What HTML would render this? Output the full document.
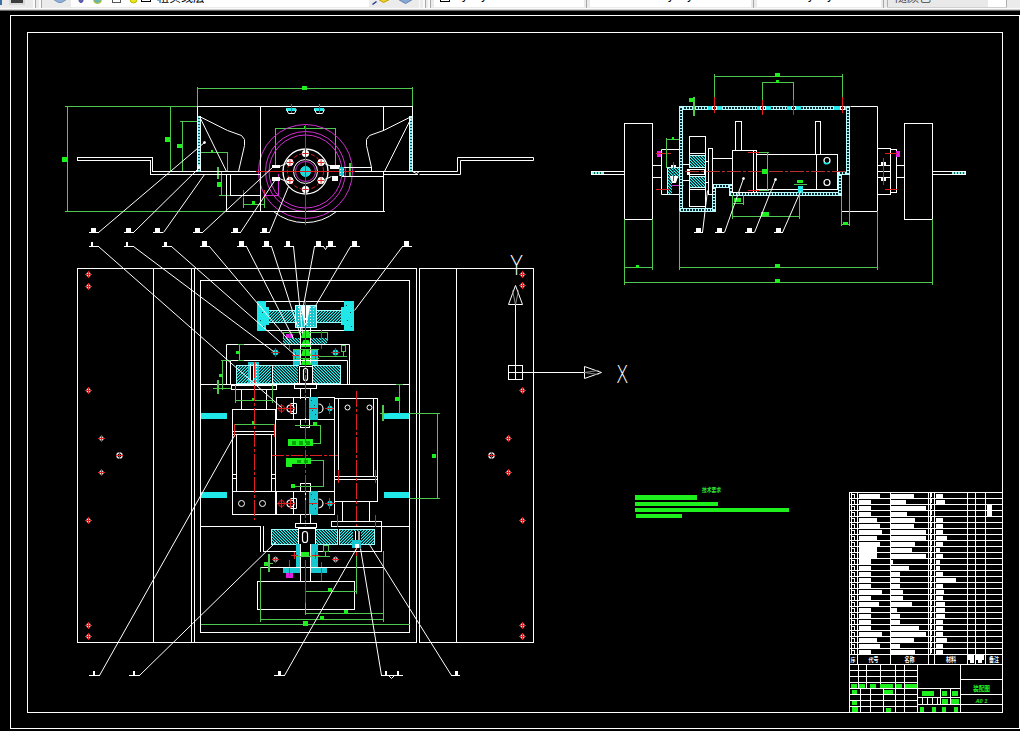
<!DOCTYPE html>
<html><head><meta charset="utf-8"><title>CAD</title>
<style>
html,body{margin:0;padding:0;background:#000;}
body{width:1020px;height:731px;overflow:hidden;position:relative;font-family:"Liberation Sans","Noto Sans CJK SC",sans-serif;}
#tb{position:absolute;left:0;top:0;width:1020px;height:11px;overflow:hidden;}
svg{position:absolute;left:0;top:0;}
</style></head><body>
<svg width="1020" height="731" viewBox="0 0 1020 731" font-family="'Liberation Sans','Noto Sans CJK SC',sans-serif">
<defs>
<pattern id="hc" width="3" height="3" patternUnits="userSpaceOnUse" shape-rendering="crispEdges"><rect x="0" y="0" width="1" height="1" fill="#0f7474"/><rect x="1" y="0" width="1" height="1" fill="#001414"/><rect x="2" y="0" width="1" height="1" fill="#36f2f2"/><rect x="0" y="1" width="1" height="1" fill="#001414"/><rect x="1" y="1" width="1" height="1" fill="#36f2f2"/><rect x="2" y="1" width="1" height="1" fill="#0f7474"/><rect x="0" y="2" width="1" height="1" fill="#36f2f2"/><rect x="1" y="2" width="1" height="1" fill="#0f7474"/><rect x="2" y="2" width="1" height="1" fill="#001414"/></pattern>
<pattern id="hd" width="3" height="3" patternUnits="userSpaceOnUse" shape-rendering="crispEdges"><rect x="0" y="0" width="1" height="1" fill="#0f7474"/><rect x="1" y="0" width="1" height="1" fill="#001414"/><rect x="2" y="0" width="1" height="1" fill="#36f2f2"/><rect x="0" y="1" width="1" height="1" fill="#36f2f2"/><rect x="1" y="1" width="1" height="1" fill="#0f7474"/><rect x="2" y="1" width="1" height="1" fill="#001414"/><rect x="0" y="2" width="1" height="1" fill="#001414"/><rect x="1" y="2" width="1" height="1" fill="#36f2f2"/><rect x="2" y="2" width="1" height="1" fill="#0f7474"/></pattern>
<pattern id="hw" width="3" height="3" patternUnits="userSpaceOnUse"><rect width="3" height="3" fill="#18c8d0"/><rect x="1" y="1" width="1" height="1" fill="#fff"/></pattern>
</defs>
<rect x="0" y="0" width="1020" height="8" fill="#ebebeb"/>
<rect x="0" y="8" width="1020" height="1" fill="#fbfbfb"/>
<rect x="0" y="9" width="1020" height="1" fill="#cfcfcf"/>
<rect x="0" y="10" width="1020" height="1" fill="#686868"/>
<rect x="0" y="0" width="2" height="5" fill="#3a6ea5"/>
<rect x="9" y="0" width="16" height="5" fill="#d8d8d8"/>
<rect x="11" y="0" width="12" height="3" fill="#3c3c3c"/>
<rect x="33" y="0" width="2" height="8" fill="#fafafa"/>
<rect x="35" y="0" width="1" height="8" fill="#a8a8a8"/>
<rect x="39" y="0" width="2" height="8" fill="#fafafa"/>
<rect x="41" y="0" width="1" height="8" fill="#a8a8a8"/>
<rect x="71" y="0" width="298" height="7" fill="#ffffff"/>
<polygon points="53.5,-0.5 58.5,2.5 61.5,2.5 66.5,-0.5" fill="#8fb0d8" stroke="#6f8fb8" stroke-width="1"/>
<circle cx="81.0" cy="0.5" r="2" fill="#6060b0" stroke="#5050a0" stroke-width="1" />
<circle cx="97.5" cy="-0.5" r="4" fill="#60b8b0" stroke="#c8c020" stroke-width="1" />
<rect x="112" y="0" width="9" height="2" fill="#fff"/>
<rect x="112" y="2" width="9" height="1" fill="#555"/>
<rect x="112" y="0" width="1" height="3" fill="#555"/>
<rect x="120" y="0" width="1" height="3" fill="#555"/>
<circle cx="133.5" cy="-0.5" r="3.5" fill="#e8e820" stroke="#b8b800" stroke-width="1" />
<rect x="141" y="0" width="10" height="2" fill="#fff"/>
<rect x="141" y="1" width="10" height="1" fill="#000"/>
<rect x="141" y="0" width="1" height="2" fill="#000"/>
<rect x="150" y="0" width="1" height="2" fill="#000"/>
<text x="157" y="1.5" font-size="12" fill="#000">粗实线层</text>
<line x1="372.5" y1="4.5" x2="376.5" y2="1.5" stroke="#203080" stroke-width="1.4" />
<polygon points="378.5,-0.5 383.5,2.5 389.5,-0.5" fill="#f0d020" stroke="#c0a000" stroke-width="1"/>
<polygon points="398.5,-0.5 405.5,3.5 412.5,-0.5" fill="#88a8d8" stroke="#6080b0" stroke-width="1"/>
<rect x="419" y="0" width="1" height="8" fill="#fafafa"/>
<rect x="423" y="0" width="2" height="8" fill="#fafafa"/>
<rect x="425" y="0" width="1" height="8" fill="#a8a8a8"/>
<rect x="428" y="0" width="2" height="8" fill="#fafafa"/>
<rect x="430" y="0" width="1" height="8" fill="#a8a8a8"/>
<rect x="434" y="0" width="150" height="7" fill="#ffffff"/>
<rect x="440" y="1" width="10" height="1" fill="#000"/>
<rect x="440" y="0" width="1" height="2" fill="#000"/>
<rect x="449" y="0" width="1" height="2" fill="#000"/>
<text x="454" y="-1" font-size="12" fill="#000">ByLayer</text>
<rect x="586" y="0" width="1" height="8" fill="#a8a8a8"/>
<rect x="590" y="0" width="161" height="7" fill="#ffffff"/>
<text x="660" y="-1" font-size="12" fill="#000">ByLayer</text>
<rect x="753" y="0" width="1" height="8" fill="#a8a8a8"/>
<rect x="757" y="0" width="124" height="7" fill="#ffffff"/>
<text x="800" y="-1" font-size="12" fill="#000">ByLayer</text>
<rect x="883" y="0" width="1" height="8" fill="#a8a8a8"/>
<rect x="887" y="0" width="119" height="7" fill="#e9e9e9"/>
<rect x="988" y="0" width="18" height="7" fill="#ffffff"/>
<rect x="887" y="0" width="1" height="8" fill="#b0b0b0"/>
<rect x="1006" y="0" width="1" height="8" fill="#b0b0b0"/>
<rect x="887" y="7" width="120" height="1" fill="#d0d0d0"/>
<text x="895" y="1.5" font-size="12" fill="#444">随颜色</text>
<rect x="0" y="11" width="1020" height="720" fill="#000"/>
<rect x="10" y="15" width="1010" height="1" fill="#ffffff"/>
<rect x="10" y="728" width="1010" height="1" fill="#ffffff"/>
<rect x="10" y="15" width="1" height="714" fill="#ffffff"/>
<rect x="1019" y="15" width="1" height="714" fill="#ffffff"/>
<rect x="27" y="32" width="976" height="1" fill="#ffffff"/>
<rect x="27" y="712" width="976" height="1" fill="#ffffff"/>
<rect x="27" y="32" width="1" height="681" fill="#ffffff"/>
<rect x="1002" y="32" width="1" height="681" fill="#ffffff"/>
<rect x="67" y="106" width="1" height="106" fill="#4fc84f"/>
<rect x="65" y="106" width="133" height="1" fill="#4fc84f"/>
<rect x="65" y="211" width="162" height="1" fill="#4fc84f"/>
<rect x="62" y="157" width="5" height="5" fill="#1ef01e"/>
<rect x="197" y="87" width="1" height="20" fill="#4fc84f"/>
<rect x="197" y="88" width="216" height="1" fill="#4fc84f"/>
<rect x="412" y="87" width="1" height="20" fill="#4fc84f"/>
<rect x="302" y="86" width="5" height="4" fill="#1ef01e"/>
<rect x="170" y="106" width="1" height="66" fill="#4fc84f"/>
<rect x="165" y="137" width="5" height="5" fill="#1ef01e"/>
<rect x="182" y="121" width="1" height="51" fill="#4fc84f"/>
<rect x="180" y="121" width="21" height="1" fill="#4fc84f"/>
<rect x="177" y="144" width="5" height="4" fill="#1ef01e"/>
<rect x="200" y="152" width="28" height="1" fill="#4fc84f"/>
<rect x="227" y="152" width="1" height="20" fill="#4fc84f"/>
<rect x="200" y="152" width="1" height="20" fill="#4fc84f"/>
<rect x="211" y="150" width="2" height="2" fill="#1ef01e"/>
<rect x="217" y="167" width="2" height="12" fill="#4fc84f"/>
<rect x="213" y="174" width="10" height="1" fill="#4fc84f"/>
<rect x="221" y="172" width="1" height="24" fill="#4fc84f"/>
<rect x="217" y="182" width="4" height="5" fill="#1ef01e"/>
<rect x="219" y="195" width="13" height="1" fill="#4fc84f"/>
<rect x="243" y="198" width="1" height="10" fill="#4fc84f"/>
<rect x="264" y="198" width="1" height="10" fill="#4fc84f"/>
<rect x="243" y="204" width="22" height="1" fill="#4fc84f"/>
<rect x="252" y="201" width="3" height="4" fill="#1ef01e"/>
<rect x="243" y="190" width="1" height="8" fill="#e02020"/>
<rect x="264" y="190" width="1" height="8" fill="#e02020"/>
<rect x="275" y="128" width="61" height="1" fill="#4fc84f"/>
<rect x="275" y="128" width="1" height="39" fill="#4fc84f"/>
<rect x="335" y="128" width="1" height="39" fill="#4fc84f"/>
<rect x="304" y="126" width="2" height="2" fill="#1ef01e"/>
<rect x="349" y="163" width="2" height="14" fill="#4fc84f"/>
<rect x="345" y="171" width="8" height="1" fill="#4fc84f"/>
<circle cx="305.5" cy="171.5" r="47" fill="none" stroke="#d030d0" stroke-width="1" />
<circle cx="305.5" cy="171.5" r="40" fill="none" stroke="#d030d0" stroke-width="1" />
<circle cx="305.5" cy="171.5" r="36.5" fill="none" stroke="#d030d0" stroke-width="1" />
<circle cx="305.5" cy="171.5" r="10" fill="none" stroke="#d030d0" stroke-width="1" />
<rect x="278" y="174" width="1" height="22" fill="#d030d0"/>
<rect x="264" y="195" width="15" height="1" fill="#d030d0"/>
<rect x="197" y="106" width="216" height="1" fill="#ffffff"/>
<rect x="197" y="106" width="1" height="11" fill="#ffffff"/>
<rect x="412" y="106" width="1" height="11" fill="#ffffff"/>
<rect x="260" y="106" width="1" height="106" fill="#ffffff"/>
<rect x="383" y="106" width="1" height="25" fill="#ffffff"/>
<rect x="383" y="171" width="1" height="41" fill="#ffffff"/>
<rect x="226" y="211" width="159" height="1" fill="#ffffff"/>
<rect x="226" y="174" width="1" height="38" fill="#ffffff"/>
<rect x="230" y="174" width="1" height="22" fill="#ffffff"/>
<rect x="230" y="195" width="31" height="1" fill="#ffffff"/>
<path d="M273.5,211.5 A50,50 0 0 0 336.5,211.5" fill="none" stroke="#fff" stroke-width="1"/>
<rect x="77" y="157" width="76" height="1" fill="#ffffff"/>
<rect x="77" y="160" width="74" height="1" fill="#ffffff"/>
<rect x="77" y="157" width="1" height="4" fill="#ffffff"/>
<rect x="152" y="157" width="1" height="15" fill="#ffffff"/>
<rect x="150" y="160" width="1" height="15" fill="#ffffff"/>
<rect x="152" y="171" width="107" height="1" fill="#ffffff"/>
<rect x="150" y="174" width="111" height="1" fill="#ffffff"/>
<rect x="342" y="167" width="30" height="1" fill="#ffffff"/>
<rect x="371" y="167" width="1" height="5" fill="#ffffff"/>
<rect x="352" y="171" width="66" height="1" fill="#ffffff"/>
<rect x="383" y="174" width="35" height="1" fill="#ffffff"/>
<rect x="342" y="176" width="42" height="1" fill="#ffffff"/>
<polyline points="416.5,171.5 457.5,171.5 457.5,157.5 533.5,157.5 533.5,160.5 460.5,160.5 460.5,174.5 419.5,174.5" fill="none" stroke="#ffffff" stroke-width="1"/>
<polyline points="412.5,171.5 416.5,173.5 419.5,171.5" fill="none" stroke="#ffffff" stroke-width="1"/>
<rect x="197" y="116" width="4" height="56" fill="#7fe8ee"/>
<rect x="197" y="116" width="1" height="56" fill="#e8ffff"/>
<rect x="200" y="116" width="1" height="56" fill="#e8ffff"/>
<rect x="198" y="118" width="2" height="1" fill="#0a5058"/>
<rect x="198" y="121" width="2" height="1" fill="#0a5058"/>
<rect x="198" y="124" width="2" height="1" fill="#0a5058"/>
<rect x="198" y="127" width="2" height="1" fill="#0a5058"/>
<rect x="198" y="130" width="2" height="1" fill="#0a5058"/>
<rect x="198" y="133" width="2" height="1" fill="#0a5058"/>
<rect x="198" y="136" width="2" height="1" fill="#0a5058"/>
<rect x="198" y="139" width="2" height="1" fill="#0a5058"/>
<rect x="198" y="142" width="2" height="1" fill="#0a5058"/>
<rect x="198" y="145" width="2" height="1" fill="#0a5058"/>
<rect x="198" y="148" width="2" height="1" fill="#0a5058"/>
<rect x="198" y="151" width="2" height="1" fill="#0a5058"/>
<rect x="198" y="154" width="2" height="1" fill="#0a5058"/>
<rect x="198" y="157" width="2" height="1" fill="#0a5058"/>
<rect x="198" y="160" width="2" height="1" fill="#0a5058"/>
<rect x="198" y="163" width="2" height="1" fill="#0a5058"/>
<rect x="198" y="166" width="2" height="1" fill="#0a5058"/>
<rect x="198" y="169" width="2" height="1" fill="#0a5058"/>
<rect x="409" y="116" width="4" height="56" fill="#7fe8ee"/>
<rect x="409" y="116" width="1" height="56" fill="#e8ffff"/>
<rect x="412" y="116" width="1" height="56" fill="#e8ffff"/>
<rect x="410" y="118" width="2" height="1" fill="#0a5058"/>
<rect x="410" y="121" width="2" height="1" fill="#0a5058"/>
<rect x="410" y="124" width="2" height="1" fill="#0a5058"/>
<rect x="410" y="127" width="2" height="1" fill="#0a5058"/>
<rect x="410" y="130" width="2" height="1" fill="#0a5058"/>
<rect x="410" y="133" width="2" height="1" fill="#0a5058"/>
<rect x="410" y="136" width="2" height="1" fill="#0a5058"/>
<rect x="410" y="139" width="2" height="1" fill="#0a5058"/>
<rect x="410" y="142" width="2" height="1" fill="#0a5058"/>
<rect x="410" y="145" width="2" height="1" fill="#0a5058"/>
<rect x="410" y="148" width="2" height="1" fill="#0a5058"/>
<rect x="410" y="151" width="2" height="1" fill="#0a5058"/>
<rect x="410" y="154" width="2" height="1" fill="#0a5058"/>
<rect x="410" y="157" width="2" height="1" fill="#0a5058"/>
<rect x="410" y="160" width="2" height="1" fill="#0a5058"/>
<rect x="410" y="163" width="2" height="1" fill="#0a5058"/>
<rect x="410" y="166" width="2" height="1" fill="#0a5058"/>
<rect x="410" y="169" width="2" height="1" fill="#0a5058"/>
<polyline points="199.5,116.5 227.5,130.5 241.5,135.5 244.5,139.5 244.5,145.5 238.5,171.5" fill="none" stroke="#ffffff" stroke-width="1"/>
<line x1="199.5" y1="116.5" x2="226.5" y2="171.5" stroke="#ffffff" stroke-width="1" />
<polyline points="411.5,116.5 383.5,130.5 369.5,135.5 366.5,139.5 366.5,145.5 371.5,167.5" fill="none" stroke="#ffffff" stroke-width="1"/>
<line x1="411.5" y1="117.5" x2="384.5" y2="171.5" stroke="#ffffff" stroke-width="1" />
<rect x="286" y="108" width="10" height="3" fill="#20e8e8"/>
<polyline points="286.5,109.5 288.5,113.5 294.5,113.5 296.5,109.5" fill="none" stroke="#ffffff" stroke-width="1"/>
<rect x="291" y="104" width="1" height="9" fill="#e02020"/>
<rect x="314" y="108" width="10" height="3" fill="#20e8e8"/>
<polyline points="314.5,109.5 316.5,113.5 322.5,113.5 324.5,109.5" fill="none" stroke="#ffffff" stroke-width="1"/>
<rect x="319" y="104" width="1" height="9" fill="#e02020"/>
<circle cx="305.5" cy="171.5" r="22.5" fill="none" stroke="#ffffff" stroke-width="1.3" />
<circle cx="305.5" cy="171.5" r="12" fill="none" stroke="#ffffff" stroke-width="1" />
<circle cx="305.5" cy="171.5" r="18" fill="none" stroke="#e02020" stroke-width="1" stroke-dasharray="4 2"/>
<circle cx="305.5" cy="171.5" r="5" fill="#20d8d8" stroke="#20e8e8" stroke-width="1" />
<circle cx="305.5" cy="153.5" r="3.2" fill="#fff" stroke="#ffffff" stroke-width="1" />
<path d="M302.5,153.5 h6 M305.5,150.5 v6" stroke="#e02020" stroke-width="1"/>
<circle cx="289.9115427318801" cy="162.5" r="3.2" fill="#fff" stroke="#ffffff" stroke-width="1" />
<path d="M286.9115427318801,162.5 h6 M289.9115427318801,159.5 v6" stroke="#e02020" stroke-width="1"/>
<circle cx="289.9115427318801" cy="180.5" r="3.2" fill="#fff" stroke="#ffffff" stroke-width="1" />
<path d="M286.9115427318801,180.5 h6 M289.9115427318801,177.5 v6" stroke="#e02020" stroke-width="1"/>
<circle cx="305.5" cy="189.5" r="3.2" fill="#fff" stroke="#ffffff" stroke-width="1" />
<path d="M302.5,189.5 h6 M305.5,186.5 v6" stroke="#e02020" stroke-width="1"/>
<circle cx="321.0884572681199" cy="180.5" r="3.2" fill="#fff" stroke="#ffffff" stroke-width="1" />
<path d="M318.0884572681199,180.5 h6 M321.0884572681199,177.5 v6" stroke="#e02020" stroke-width="1"/>
<circle cx="321.0884572681199" cy="162.5" r="3.2" fill="#fff" stroke="#ffffff" stroke-width="1" />
<path d="M318.0884572681199,162.5 h6 M321.0884572681199,159.5 v6" stroke="#e02020" stroke-width="1"/>
<rect x="256" y="171" width="99" height="1" fill="#e02020"/>
<rect x="305" y="125" width="1" height="100" fill="#e02020"/>
<rect x="272" y="165" width="8" height="3" fill="#ffffff"/>
<rect x="272" y="177" width="8" height="4" fill="#ffffff"/>
<rect x="330" y="165" width="10" height="4" fill="#ffffff"/>
<rect x="332" y="176" width="6" height="5" fill="#ffffff"/>
<rect x="326" y="166" width="19" height="11" fill="none"/>
<rect x="339" y="167" width="5" height="9" fill="url(#hw)"/>
<line x1="279.5" y1="166.5" x2="286.5" y2="163.5" stroke="#ffffff" stroke-width="1" />
<line x1="279.5" y1="178.5" x2="286.5" y2="181.5" stroke="#ffffff" stroke-width="1" />
<line x1="324.5" y1="163.5" x2="331.5" y2="166.5" stroke="#ffffff" stroke-width="1" />
<line x1="324.5" y1="179.5" x2="331.5" y2="176.5" stroke="#ffffff" stroke-width="1" />
<rect x="89" y="232" width="10" height="1" fill="#ffffff"/>
<rect x="91" y="228" width="5" height="4" fill="#ffffff"/>
<rect x="124" y="232" width="10" height="1" fill="#ffffff"/>
<rect x="126" y="228" width="5" height="4" fill="#ffffff"/>
<rect x="153" y="232" width="10" height="1" fill="#ffffff"/>
<rect x="155" y="228" width="5" height="4" fill="#ffffff"/>
<rect x="193" y="232" width="10" height="1" fill="#ffffff"/>
<rect x="195" y="228" width="5" height="4" fill="#ffffff"/>
<rect x="231" y="232" width="10" height="1" fill="#ffffff"/>
<rect x="233" y="228" width="5" height="4" fill="#ffffff"/>
<rect x="260" y="232" width="10" height="1" fill="#ffffff"/>
<rect x="262" y="228" width="5" height="4" fill="#ffffff"/>
<rect x="89" y="246" width="10" height="1" fill="#ffffff"/>
<rect x="91" y="242" width="2" height="4" fill="#ffffff"/>
<rect x="124" y="246" width="10" height="1" fill="#ffffff"/>
<rect x="126" y="242" width="2" height="4" fill="#ffffff"/>
<rect x="162" y="246" width="10" height="1" fill="#ffffff"/>
<rect x="164" y="242" width="3" height="4" fill="#ffffff"/>
<rect x="200" y="246" width="10" height="1" fill="#ffffff"/>
<rect x="202" y="241" width="5" height="5" fill="#ffffff"/>
<rect x="237" y="246" width="10" height="1" fill="#ffffff"/>
<rect x="239" y="241" width="5" height="5" fill="#ffffff"/>
<rect x="262" y="246" width="10" height="1" fill="#ffffff"/>
<rect x="264" y="241" width="5" height="5" fill="#ffffff"/>
<rect x="284" y="246" width="10" height="1" fill="#ffffff"/>
<rect x="286" y="241" width="4" height="5" fill="#ffffff"/>
<rect x="314" y="246" width="10" height="1" fill="#ffffff"/>
<rect x="316" y="241" width="5" height="5" fill="#ffffff"/>
<rect x="326" y="246" width="10" height="1" fill="#ffffff"/>
<rect x="328" y="241" width="5" height="5" fill="#ffffff"/>
<rect x="350" y="246" width="10" height="1" fill="#ffffff"/>
<rect x="352" y="241" width="5" height="5" fill="#ffffff"/>
<rect x="402" y="246" width="10" height="1" fill="#ffffff"/>
<rect x="404" y="241" width="5" height="5" fill="#ffffff"/>
<line x1="98.5" y1="232.5" x2="204.5" y2="142.5" stroke="#ffffff" stroke-width="1" />
<circle cx="204.5" cy="142.5" r="1" fill="#fff" stroke="#ffffff" stroke-width="1" />
<line x1="133.5" y1="232.5" x2="199.5" y2="167.5" stroke="#ffffff" stroke-width="1" />
<circle cx="199.0" cy="167.0" r="1" fill="#fff" stroke="#ffffff" stroke-width="1" />
<line x1="163.5" y1="232.5" x2="204.5" y2="174.5" stroke="#ffffff" stroke-width="1" />
<line x1="202.5" y1="232.5" x2="272.5" y2="167.5" stroke="#ffffff" stroke-width="1" />
<line x1="240.5" y1="232.5" x2="275.5" y2="179.5" stroke="#ffffff" stroke-width="1" />
<line x1="269.5" y1="232.5" x2="288.5" y2="186.5" stroke="#ffffff" stroke-width="1" />
<rect x="624" y="123" width="29" height="1" fill="#ffffff"/>
<rect x="624" y="219" width="29" height="1" fill="#ffffff"/>
<rect x="624" y="123" width="1" height="97" fill="#ffffff"/>
<rect x="652" y="123" width="1" height="97" fill="#ffffff"/>
<rect x="904" y="123" width="29" height="1" fill="#ffffff"/>
<rect x="904" y="219" width="29" height="1" fill="#ffffff"/>
<rect x="904" y="123" width="1" height="97" fill="#ffffff"/>
<rect x="932" y="123" width="1" height="97" fill="#ffffff"/>
<rect x="591" y="171" width="34" height="1" fill="#ffffff"/>
<rect x="591" y="174" width="34" height="1" fill="#ffffff"/>
<rect x="591" y="171" width="1" height="4" fill="#ffffff"/>
<rect x="624" y="171" width="1" height="4" fill="#ffffff"/>
<rect x="592" y="172" width="12" height="2" fill="#8fe8ee"/>
<rect x="594" y="172" width="1" height="2" fill="#063"/>
<rect x="597" y="172" width="1" height="2" fill="#063"/>
<rect x="600" y="172" width="1" height="2" fill="#063"/>
<rect x="932" y="171" width="34" height="1" fill="#ffffff"/>
<rect x="932" y="174" width="34" height="1" fill="#ffffff"/>
<rect x="932" y="171" width="1" height="4" fill="#ffffff"/>
<rect x="965" y="171" width="1" height="4" fill="#ffffff"/>
<rect x="952" y="172" width="13" height="2" fill="#8fe8ee"/>
<rect x="954" y="172" width="1" height="2" fill="#063"/>
<rect x="957" y="172" width="1" height="2" fill="#063"/>
<rect x="960" y="172" width="1" height="2" fill="#063"/>
<rect x="963" y="172" width="1" height="2" fill="#063"/>
<rect x="652" y="165" width="10" height="1" fill="#ffffff"/>
<rect x="652" y="177" width="10" height="1" fill="#ffffff"/>
<rect x="652" y="165" width="1" height="13" fill="#ffffff"/>
<rect x="661" y="165" width="1" height="13" fill="#ffffff"/>
<polyline points="679.5,149.5 661.5,149.5 661.5,194.5 679.5,194.5" fill="none" stroke="#ffffff" stroke-width="1"/>
<rect x="667" y="167" width="13" height="11" fill="url(#hd)"/>
<rect x="667" y="178" width="5" height="17" fill="url(#hd)"/>
<rect x="667" y="167" width="13" height="1" fill="#c8ffff"/>
<rect x="667" y="167" width="1" height="28" fill="#c8ffff"/>
<rect x="667" y="194" width="6" height="1" fill="#c8ffff"/>
<polygon points="670.5,176.5 672.5,182.5 675.5,182.5 677.5,176.5" fill="#fff" stroke="#ffffff" stroke-width="1.2"/>
<rect x="671" y="165" width="5" height="2" fill="#ffffff"/>
<rect x="673" y="162" width="1" height="19" fill="#e02020"/>
<rect x="657" y="151" width="4" height="6" fill="#e020e0"/>
<rect x="656" y="153" width="15" height="1" fill="#e02020"/>
<rect x="656" y="189" width="13" height="1" fill="#e02020"/>
<rect x="672" y="185" width="12" height="1" fill="#d030d0"/>
<rect x="666" y="138" width="1" height="30" fill="#4fc84f"/>
<rect x="679" y="138" width="1" height="30" fill="#4fc84f"/>
<rect x="666" y="139" width="14" height="1" fill="#4fc84f"/>
<rect x="672" y="137" width="2" height="3" fill="#1ef01e"/>
<rect x="679" y="106" width="171" height="4" fill="#b8fbff"/>
<rect x="681" y="107" width="2" height="2" fill="#052a30"/>
<rect x="684" y="107" width="2" height="2" fill="#052a30"/>
<rect x="687" y="107" width="2" height="2" fill="#052a30"/>
<rect x="690" y="107" width="2" height="2" fill="#052a30"/>
<rect x="693" y="107" width="2" height="2" fill="#052a30"/>
<rect x="696" y="107" width="2" height="2" fill="#052a30"/>
<rect x="699" y="107" width="2" height="2" fill="#052a30"/>
<rect x="702" y="107" width="2" height="2" fill="#052a30"/>
<rect x="705" y="107" width="2" height="2" fill="#052a30"/>
<rect x="708" y="107" width="2" height="2" fill="#052a30"/>
<rect x="711" y="107" width="2" height="2" fill="#052a30"/>
<rect x="714" y="107" width="2" height="2" fill="#052a30"/>
<rect x="717" y="107" width="2" height="2" fill="#052a30"/>
<rect x="720" y="107" width="2" height="2" fill="#052a30"/>
<rect x="723" y="107" width="2" height="2" fill="#052a30"/>
<rect x="726" y="107" width="2" height="2" fill="#052a30"/>
<rect x="729" y="107" width="2" height="2" fill="#052a30"/>
<rect x="732" y="107" width="2" height="2" fill="#052a30"/>
<rect x="735" y="107" width="2" height="2" fill="#052a30"/>
<rect x="738" y="107" width="2" height="2" fill="#052a30"/>
<rect x="741" y="107" width="2" height="2" fill="#052a30"/>
<rect x="744" y="107" width="2" height="2" fill="#052a30"/>
<rect x="747" y="107" width="2" height="2" fill="#052a30"/>
<rect x="750" y="107" width="2" height="2" fill="#052a30"/>
<rect x="753" y="107" width="2" height="2" fill="#052a30"/>
<rect x="756" y="107" width="2" height="2" fill="#052a30"/>
<rect x="759" y="107" width="2" height="2" fill="#052a30"/>
<rect x="762" y="107" width="2" height="2" fill="#052a30"/>
<rect x="765" y="107" width="2" height="2" fill="#052a30"/>
<rect x="768" y="107" width="2" height="2" fill="#052a30"/>
<rect x="771" y="107" width="2" height="2" fill="#052a30"/>
<rect x="774" y="107" width="2" height="2" fill="#052a30"/>
<rect x="777" y="107" width="2" height="2" fill="#052a30"/>
<rect x="780" y="107" width="2" height="2" fill="#052a30"/>
<rect x="783" y="107" width="2" height="2" fill="#052a30"/>
<rect x="786" y="107" width="2" height="2" fill="#052a30"/>
<rect x="789" y="107" width="2" height="2" fill="#052a30"/>
<rect x="792" y="107" width="2" height="2" fill="#052a30"/>
<rect x="795" y="107" width="2" height="2" fill="#052a30"/>
<rect x="798" y="107" width="2" height="2" fill="#052a30"/>
<rect x="801" y="107" width="2" height="2" fill="#052a30"/>
<rect x="804" y="107" width="2" height="2" fill="#052a30"/>
<rect x="807" y="107" width="2" height="2" fill="#052a30"/>
<rect x="810" y="107" width="2" height="2" fill="#052a30"/>
<rect x="813" y="107" width="2" height="2" fill="#052a30"/>
<rect x="816" y="107" width="2" height="2" fill="#052a30"/>
<rect x="819" y="107" width="2" height="2" fill="#052a30"/>
<rect x="822" y="107" width="2" height="2" fill="#052a30"/>
<rect x="825" y="107" width="2" height="2" fill="#052a30"/>
<rect x="828" y="107" width="2" height="2" fill="#052a30"/>
<rect x="831" y="107" width="2" height="2" fill="#052a30"/>
<rect x="834" y="107" width="2" height="2" fill="#052a30"/>
<rect x="837" y="107" width="2" height="2" fill="#052a30"/>
<rect x="840" y="107" width="2" height="2" fill="#052a30"/>
<rect x="843" y="107" width="2" height="2" fill="#052a30"/>
<rect x="846" y="107" width="2" height="2" fill="#052a30"/>
<rect x="679" y="106" width="4" height="106" fill="#b8fbff"/>
<rect x="680" y="108" width="2" height="2" fill="#052a30"/>
<rect x="680" y="111" width="2" height="2" fill="#052a30"/>
<rect x="680" y="114" width="2" height="2" fill="#052a30"/>
<rect x="680" y="117" width="2" height="2" fill="#052a30"/>
<rect x="680" y="120" width="2" height="2" fill="#052a30"/>
<rect x="680" y="123" width="2" height="2" fill="#052a30"/>
<rect x="680" y="126" width="2" height="2" fill="#052a30"/>
<rect x="680" y="129" width="2" height="2" fill="#052a30"/>
<rect x="680" y="132" width="2" height="2" fill="#052a30"/>
<rect x="680" y="135" width="2" height="2" fill="#052a30"/>
<rect x="680" y="138" width="2" height="2" fill="#052a30"/>
<rect x="680" y="141" width="2" height="2" fill="#052a30"/>
<rect x="680" y="144" width="2" height="2" fill="#052a30"/>
<rect x="680" y="147" width="2" height="2" fill="#052a30"/>
<rect x="680" y="150" width="2" height="2" fill="#052a30"/>
<rect x="680" y="153" width="2" height="2" fill="#052a30"/>
<rect x="680" y="156" width="2" height="2" fill="#052a30"/>
<rect x="680" y="159" width="2" height="2" fill="#052a30"/>
<rect x="680" y="162" width="2" height="2" fill="#052a30"/>
<rect x="680" y="165" width="2" height="2" fill="#052a30"/>
<rect x="680" y="168" width="2" height="2" fill="#052a30"/>
<rect x="680" y="171" width="2" height="2" fill="#052a30"/>
<rect x="680" y="174" width="2" height="2" fill="#052a30"/>
<rect x="680" y="177" width="2" height="2" fill="#052a30"/>
<rect x="680" y="180" width="2" height="2" fill="#052a30"/>
<rect x="680" y="183" width="2" height="2" fill="#052a30"/>
<rect x="680" y="186" width="2" height="2" fill="#052a30"/>
<rect x="680" y="189" width="2" height="2" fill="#052a30"/>
<rect x="680" y="192" width="2" height="2" fill="#052a30"/>
<rect x="680" y="195" width="2" height="2" fill="#052a30"/>
<rect x="680" y="198" width="2" height="2" fill="#052a30"/>
<rect x="680" y="201" width="2" height="2" fill="#052a30"/>
<rect x="680" y="204" width="2" height="2" fill="#052a30"/>
<rect x="680" y="207" width="2" height="2" fill="#052a30"/>
<rect x="679" y="208" width="37" height="4" fill="#b8fbff"/>
<rect x="681" y="209" width="2" height="2" fill="#052a30"/>
<rect x="684" y="209" width="2" height="2" fill="#052a30"/>
<rect x="687" y="209" width="2" height="2" fill="#052a30"/>
<rect x="690" y="209" width="2" height="2" fill="#052a30"/>
<rect x="693" y="209" width="2" height="2" fill="#052a30"/>
<rect x="696" y="209" width="2" height="2" fill="#052a30"/>
<rect x="699" y="209" width="2" height="2" fill="#052a30"/>
<rect x="702" y="209" width="2" height="2" fill="#052a30"/>
<rect x="705" y="209" width="2" height="2" fill="#052a30"/>
<rect x="708" y="209" width="2" height="2" fill="#052a30"/>
<rect x="711" y="209" width="2" height="2" fill="#052a30"/>
<rect x="712" y="184" width="4" height="28" fill="#b8fbff"/>
<rect x="713" y="186" width="2" height="2" fill="#052a30"/>
<rect x="713" y="189" width="2" height="2" fill="#052a30"/>
<rect x="713" y="192" width="2" height="2" fill="#052a30"/>
<rect x="713" y="195" width="2" height="2" fill="#052a30"/>
<rect x="713" y="198" width="2" height="2" fill="#052a30"/>
<rect x="713" y="201" width="2" height="2" fill="#052a30"/>
<rect x="713" y="204" width="2" height="2" fill="#052a30"/>
<rect x="713" y="207" width="2" height="2" fill="#052a30"/>
<rect x="712" y="184" width="21" height="4" fill="#b8fbff"/>
<rect x="714" y="185" width="2" height="2" fill="#052a30"/>
<rect x="717" y="185" width="2" height="2" fill="#052a30"/>
<rect x="720" y="185" width="2" height="2" fill="#052a30"/>
<rect x="723" y="185" width="2" height="2" fill="#052a30"/>
<rect x="726" y="185" width="2" height="2" fill="#052a30"/>
<rect x="729" y="185" width="2" height="2" fill="#052a30"/>
<rect x="729" y="184" width="4" height="12" fill="#b8fbff"/>
<rect x="730" y="186" width="2" height="2" fill="#052a30"/>
<rect x="730" y="189" width="2" height="2" fill="#052a30"/>
<rect x="730" y="192" width="2" height="2" fill="#052a30"/>
<rect x="729" y="192" width="113" height="4" fill="#b8fbff"/>
<rect x="731" y="193" width="2" height="2" fill="#052a30"/>
<rect x="734" y="193" width="2" height="2" fill="#052a30"/>
<rect x="737" y="193" width="2" height="2" fill="#052a30"/>
<rect x="740" y="193" width="2" height="2" fill="#052a30"/>
<rect x="743" y="193" width="2" height="2" fill="#052a30"/>
<rect x="746" y="193" width="2" height="2" fill="#052a30"/>
<rect x="749" y="193" width="2" height="2" fill="#052a30"/>
<rect x="752" y="193" width="2" height="2" fill="#052a30"/>
<rect x="755" y="193" width="2" height="2" fill="#052a30"/>
<rect x="758" y="193" width="2" height="2" fill="#052a30"/>
<rect x="761" y="193" width="2" height="2" fill="#052a30"/>
<rect x="764" y="193" width="2" height="2" fill="#052a30"/>
<rect x="767" y="193" width="2" height="2" fill="#052a30"/>
<rect x="770" y="193" width="2" height="2" fill="#052a30"/>
<rect x="773" y="193" width="2" height="2" fill="#052a30"/>
<rect x="776" y="193" width="2" height="2" fill="#052a30"/>
<rect x="779" y="193" width="2" height="2" fill="#052a30"/>
<rect x="782" y="193" width="2" height="2" fill="#052a30"/>
<rect x="785" y="193" width="2" height="2" fill="#052a30"/>
<rect x="788" y="193" width="2" height="2" fill="#052a30"/>
<rect x="791" y="193" width="2" height="2" fill="#052a30"/>
<rect x="794" y="193" width="2" height="2" fill="#052a30"/>
<rect x="797" y="193" width="2" height="2" fill="#052a30"/>
<rect x="800" y="193" width="2" height="2" fill="#052a30"/>
<rect x="803" y="193" width="2" height="2" fill="#052a30"/>
<rect x="806" y="193" width="2" height="2" fill="#052a30"/>
<rect x="809" y="193" width="2" height="2" fill="#052a30"/>
<rect x="812" y="193" width="2" height="2" fill="#052a30"/>
<rect x="815" y="193" width="2" height="2" fill="#052a30"/>
<rect x="818" y="193" width="2" height="2" fill="#052a30"/>
<rect x="821" y="193" width="2" height="2" fill="#052a30"/>
<rect x="824" y="193" width="2" height="2" fill="#052a30"/>
<rect x="827" y="193" width="2" height="2" fill="#052a30"/>
<rect x="830" y="193" width="2" height="2" fill="#052a30"/>
<rect x="833" y="193" width="2" height="2" fill="#052a30"/>
<rect x="836" y="193" width="2" height="2" fill="#052a30"/>
<rect x="839" y="193" width="2" height="2" fill="#052a30"/>
<rect x="838" y="171" width="4" height="25" fill="#b8fbff"/>
<rect x="839" y="173" width="2" height="2" fill="#052a30"/>
<rect x="839" y="176" width="2" height="2" fill="#052a30"/>
<rect x="839" y="179" width="2" height="2" fill="#052a30"/>
<rect x="839" y="182" width="2" height="2" fill="#052a30"/>
<rect x="839" y="185" width="2" height="2" fill="#052a30"/>
<rect x="839" y="188" width="2" height="2" fill="#052a30"/>
<rect x="839" y="191" width="2" height="2" fill="#052a30"/>
<rect x="838" y="171" width="12" height="4" fill="#b8fbff"/>
<rect x="840" y="172" width="2" height="2" fill="#052a30"/>
<rect x="843" y="172" width="2" height="2" fill="#052a30"/>
<rect x="846" y="172" width="2" height="2" fill="#052a30"/>
<rect x="846" y="106" width="4" height="69" fill="#b8fbff"/>
<rect x="847" y="108" width="2" height="2" fill="#052a30"/>
<rect x="847" y="111" width="2" height="2" fill="#052a30"/>
<rect x="847" y="114" width="2" height="2" fill="#052a30"/>
<rect x="847" y="117" width="2" height="2" fill="#052a30"/>
<rect x="847" y="120" width="2" height="2" fill="#052a30"/>
<rect x="847" y="123" width="2" height="2" fill="#052a30"/>
<rect x="847" y="126" width="2" height="2" fill="#052a30"/>
<rect x="847" y="129" width="2" height="2" fill="#052a30"/>
<rect x="847" y="132" width="2" height="2" fill="#052a30"/>
<rect x="847" y="135" width="2" height="2" fill="#052a30"/>
<rect x="847" y="138" width="2" height="2" fill="#052a30"/>
<rect x="847" y="141" width="2" height="2" fill="#052a30"/>
<rect x="847" y="144" width="2" height="2" fill="#052a30"/>
<rect x="847" y="147" width="2" height="2" fill="#052a30"/>
<rect x="847" y="150" width="2" height="2" fill="#052a30"/>
<rect x="847" y="153" width="2" height="2" fill="#052a30"/>
<rect x="847" y="156" width="2" height="2" fill="#052a30"/>
<rect x="847" y="159" width="2" height="2" fill="#052a30"/>
<rect x="847" y="162" width="2" height="2" fill="#052a30"/>
<rect x="847" y="165" width="2" height="2" fill="#052a30"/>
<rect x="847" y="168" width="2" height="2" fill="#052a30"/>
<rect x="847" y="171" width="2" height="2" fill="#052a30"/>
<rect x="708" y="106" width="14" height="4" fill="#20e8e8"/>
<rect x="712" y="106" width="5" height="4" fill="#ffffff"/>
<rect x="713" y="107" width="1" height="2" fill="#000"/>
<rect x="715" y="107" width="1" height="2" fill="#000"/>
<rect x="757" y="106" width="14" height="4" fill="#20e8e8"/>
<rect x="760" y="106" width="6" height="4" fill="#ffffff"/>
<rect x="761" y="107" width="1" height="2" fill="#000"/>
<rect x="764" y="107" width="1" height="2" fill="#000"/>
<rect x="787" y="106" width="14" height="4" fill="#20e8e8"/>
<rect x="791" y="106" width="5" height="4" fill="#ffffff"/>
<rect x="792" y="107" width="1" height="2" fill="#000"/>
<rect x="794" y="107" width="1" height="2" fill="#000"/>
<rect x="834" y="106" width="12" height="4" fill="#20e8e8"/>
<rect x="840" y="106" width="5" height="4" fill="#ffffff"/>
<rect x="841" y="107" width="1" height="2" fill="#000"/>
<rect x="843" y="107" width="1" height="2" fill="#000"/>
<rect x="689" y="136" width="17" height="1" fill="#ffffff"/>
<rect x="689" y="206" width="17" height="1" fill="#ffffff"/>
<rect x="689" y="136" width="1" height="71" fill="#ffffff"/>
<rect x="705" y="136" width="1" height="71" fill="#ffffff"/>
<rect x="689" y="153" width="17" height="1" fill="#ffffff"/>
<rect x="689" y="189" width="17" height="1" fill="#ffffff"/>
<rect x="689" y="155" width="17" height="13" fill="url(#hd)"/>
<rect x="689" y="176" width="17" height="12" fill="url(#hd)"/>
<rect x="689" y="155" width="17" height="1" fill="#c8ffff"/>
<rect x="689" y="167" width="17" height="1" fill="#c8ffff"/>
<rect x="689" y="155" width="1" height="13" fill="#c8ffff"/>
<rect x="705" y="155" width="1" height="13" fill="#c8ffff"/>
<rect x="689" y="176" width="17" height="1" fill="#c8ffff"/>
<rect x="689" y="187" width="17" height="1" fill="#c8ffff"/>
<rect x="689" y="176" width="1" height="12" fill="#c8ffff"/>
<rect x="705" y="176" width="1" height="12" fill="#c8ffff"/>
<rect x="686" y="168" width="18" height="7" fill="#000"/>
<rect x="687" y="169" width="18" height="1" fill="#ffffff"/>
<rect x="687" y="174" width="18" height="1" fill="#ffffff"/>
<rect x="687" y="169" width="1" height="6" fill="#ffffff"/>
<rect x="704" y="169" width="1" height="6" fill="#ffffff"/>
<rect x="687" y="169" width="3" height="6" fill="#ffffff"/>
<rect x="683" y="164" width="7" height="1" fill="#ffffff"/>
<rect x="683" y="180" width="7" height="1" fill="#ffffff"/>
<rect x="708" y="148" width="5" height="1" fill="#ffffff"/>
<rect x="708" y="194" width="5" height="1" fill="#ffffff"/>
<rect x="708" y="148" width="1" height="47" fill="#ffffff"/>
<rect x="712" y="148" width="1" height="47" fill="#ffffff"/>
<rect x="705" y="161" width="4" height="1" fill="#ffffff"/>
<rect x="705" y="182" width="4" height="1" fill="#ffffff"/>
<rect x="712" y="158" width="21" height="1" fill="#ffffff"/>
<rect x="732" y="150" width="25" height="1" fill="#ffffff"/>
<rect x="732" y="192" width="25" height="1" fill="#ffffff"/>
<rect x="732" y="150" width="1" height="43" fill="#ffffff"/>
<rect x="756" y="150" width="1" height="43" fill="#ffffff"/>
<rect x="735" y="121" width="7" height="1" fill="#ffffff"/>
<rect x="735" y="150" width="7" height="1" fill="#ffffff"/>
<rect x="735" y="121" width="1" height="30" fill="#ffffff"/>
<rect x="741" y="121" width="1" height="30" fill="#ffffff"/>
<rect x="757" y="154" width="81" height="1" fill="#ffffff"/>
<rect x="757" y="189" width="81" height="1" fill="#ffffff"/>
<rect x="816" y="154" width="1" height="36" fill="#ffffff"/>
<rect x="837" y="154" width="1" height="36" fill="#ffffff"/>
<rect x="753" y="150" width="1" height="43" fill="#ffffff"/>
<rect x="815" y="121" width="6" height="1" fill="#ffffff"/>
<rect x="815" y="154" width="6" height="1" fill="#ffffff"/>
<rect x="815" y="121" width="1" height="34" fill="#ffffff"/>
<rect x="820" y="121" width="1" height="34" fill="#ffffff"/>
<circle cx="827.0" cy="160.5" r="3" fill="none" stroke="#ffffff" stroke-width="1.2" />
<circle cx="827.0" cy="182.5" r="3" fill="none" stroke="#ffffff" stroke-width="1.2" />
<path d="M824,162.5 a3,3 0 0 0 5,0" stroke="#20e8e8" fill="none" stroke-width="1.5"/>
<polyline points="850.5,106.5 877.5,106.5 877.5,211.5 841.5,211.5 841.5,195.5" fill="none" stroke="#ffffff" stroke-width="1"/>
<rect x="877" y="148" width="14" height="1" fill="#ffffff"/>
<rect x="877" y="194" width="14" height="1" fill="#ffffff"/>
<rect x="877" y="148" width="1" height="47" fill="#ffffff"/>
<rect x="890" y="148" width="1" height="47" fill="#ffffff"/>
<rect x="890" y="149" width="7" height="1" fill="#ffffff"/>
<rect x="890" y="192" width="7" height="1" fill="#ffffff"/>
<rect x="890" y="149" width="1" height="44" fill="#ffffff"/>
<rect x="896" y="149" width="1" height="44" fill="#ffffff"/>
<rect x="896" y="165" width="9" height="1" fill="#ffffff"/>
<rect x="896" y="177" width="9" height="1" fill="#ffffff"/>
<rect x="896" y="165" width="1" height="13" fill="#ffffff"/>
<rect x="904" y="165" width="1" height="13" fill="#ffffff"/>
<rect x="896" y="151" width="4" height="6" fill="#e020e0"/>
<rect x="885" y="153" width="12" height="1" fill="#e02020"/>
<rect x="885" y="189" width="12" height="1" fill="#e02020"/>
<rect x="877" y="165" width="14" height="1" fill="#ffffff"/>
<rect x="877" y="177" width="14" height="1" fill="#ffffff"/>
<rect x="877" y="165" width="1" height="13" fill="#ffffff"/>
<rect x="890" y="165" width="1" height="13" fill="#ffffff"/>
<rect x="877" y="171" width="14" height="1" fill="#ffffff"/>
<rect x="881" y="162" width="5" height="3" fill="#ffffff"/>
<rect x="881" y="177" width="5" height="4" fill="#ffffff"/>
<rect x="883" y="158" width="1" height="27" fill="#e02020"/>
<line x1="685" y1="171.5" x2="846" y2="171.5" stroke="#b83030" stroke-width="1" stroke-dasharray="14 2 3 2"/>
<rect x="748" y="152" width="12" height="1" fill="#e02020"/>
<rect x="748" y="190" width="12" height="1" fill="#e02020"/>
<rect x="714" y="76" width="129" height="1" fill="#4fc84f"/>
<rect x="714" y="74" width="1" height="24" fill="#4fc84f"/>
<rect x="714" y="97" width="1" height="16" fill="#e02020"/>
<rect x="842" y="74" width="1" height="24" fill="#4fc84f"/>
<rect x="842" y="97" width="1" height="16" fill="#e02020"/>
<rect x="775" y="73" width="5" height="4" fill="#1ef01e"/>
<rect x="762" y="82" width="32" height="1" fill="#4fc84f"/>
<rect x="762" y="82" width="1" height="19" fill="#4fc84f"/>
<rect x="793" y="82" width="1" height="19" fill="#4fc84f"/>
<rect x="762" y="100" width="1" height="15" fill="#e02020"/>
<rect x="793" y="100" width="1" height="15" fill="#e02020"/>
<rect x="776" y="80" width="3" height="3" fill="#1ef01e"/>
<rect x="693" y="97" width="2" height="19" fill="#4fc84f"/>
<rect x="689" y="98" width="5" height="4" fill="#1ef01e"/>
<rect x="767" y="152" width="1" height="39" fill="#4fc84f"/>
<rect x="759" y="152" width="10" height="1" fill="#4fc84f"/>
<rect x="759" y="190" width="10" height="1" fill="#4fc84f"/>
<rect x="762" y="169" width="5" height="5" fill="#1ef01e"/>
<rect x="732" y="195" width="1" height="24" fill="#4fc84f"/>
<rect x="799" y="190" width="1" height="29" fill="#4fc84f"/>
<rect x="732" y="216" width="68" height="1" fill="#4fc84f"/>
<rect x="761" y="212" width="8" height="4" fill="#1ef01e"/>
<rect x="734" y="198" width="7" height="4" fill="#1ef01e"/>
<rect x="743" y="195" width="1" height="10" fill="#4fc84f"/>
<rect x="733" y="203" width="11" height="1" fill="#4fc84f"/>
<rect x="797" y="180" width="6" height="3" fill="#1ef01e"/>
<rect x="794" y="184" width="13" height="1" fill="#4fc84f"/>
<rect x="798" y="186" width="5" height="7" fill="#20e8e8"/>
<rect x="624" y="219" width="1" height="66" fill="#4fc84f"/>
<rect x="652" y="219" width="1" height="51" fill="#4fc84f"/>
<rect x="624" y="267" width="29" height="1" fill="#4fc84f"/>
<rect x="636" y="265" width="3" height="3" fill="#1ef01e"/>
<rect x="679" y="211" width="1" height="59" fill="#4fc84f"/>
<rect x="679" y="267" width="199" height="1" fill="#4fc84f"/>
<rect x="877" y="211" width="1" height="59" fill="#4fc84f"/>
<rect x="775" y="264" width="5" height="4" fill="#1ef01e"/>
<rect x="624" y="282" width="309" height="1" fill="#4fc84f"/>
<rect x="932" y="219" width="1" height="66" fill="#4fc84f"/>
<rect x="775" y="279" width="5" height="4" fill="#1ef01e"/>
<rect x="841" y="196" width="1" height="30" fill="#4fc84f"/>
<rect x="849" y="175" width="1" height="51" fill="#4fc84f"/>
<rect x="841" y="224" width="9" height="1" fill="#4fc84f"/>
<rect x="843" y="222" width="5" height="3" fill="#1ef01e"/>
<rect x="694" y="232" width="9" height="1" fill="#ffffff"/>
<rect x="696" y="228" width="5" height="4" fill="#ffffff"/>
<rect x="715" y="232" width="9" height="1" fill="#ffffff"/>
<rect x="717" y="228" width="5" height="4" fill="#ffffff"/>
<rect x="745" y="232" width="9" height="1" fill="#ffffff"/>
<rect x="747" y="228" width="5" height="4" fill="#ffffff"/>
<rect x="774" y="232" width="9" height="1" fill="#ffffff"/>
<rect x="776" y="228" width="5" height="4" fill="#ffffff"/>
<line x1="702.5" y1="232.5" x2="707.5" y2="190.5" stroke="#ffffff" stroke-width="1" />
<line x1="724.5" y1="232.5" x2="743.5" y2="178.5" stroke="#ffffff" stroke-width="1" />
<circle cx="743.5" cy="178.5" r="1" fill="#fff" stroke="#ffffff" stroke-width="1" />
<line x1="754.5" y1="232.5" x2="775.5" y2="179.5" stroke="#ffffff" stroke-width="1" />
<circle cx="775.5" cy="179.5" r="1" fill="#fff" stroke="#ffffff" stroke-width="1" />
<line x1="782.5" y1="232.5" x2="800.5" y2="191.5" stroke="#ffffff" stroke-width="1" />
<rect x="77" y="268" width="77" height="1" fill="#ffffff"/>
<rect x="77" y="642" width="77" height="1" fill="#ffffff"/>
<rect x="77" y="268" width="1" height="375" fill="#ffffff"/>
<rect x="153" y="268" width="1" height="375" fill="#ffffff"/>
<rect x="153" y="268" width="264" height="1" fill="#ffffff"/>
<rect x="153" y="642" width="264" height="1" fill="#ffffff"/>
<rect x="191" y="268" width="1" height="375" fill="#ffffff"/>
<rect x="194" y="268" width="1" height="375" fill="#ffffff"/>
<rect x="416" y="268" width="1" height="375" fill="#ffffff"/>
<rect x="419" y="268" width="115" height="1" fill="#ffffff"/>
<rect x="419" y="642" width="115" height="1" fill="#ffffff"/>
<rect x="419" y="268" width="1" height="375" fill="#ffffff"/>
<rect x="533" y="268" width="1" height="375" fill="#ffffff"/>
<rect x="456" y="268" width="1" height="375" fill="#ffffff"/>
<rect x="200" y="280" width="210" height="1" fill="#ffffff"/>
<rect x="200" y="632" width="210" height="1" fill="#ffffff"/>
<rect x="200" y="280" width="1" height="353" fill="#ffffff"/>
<rect x="409" y="280" width="1" height="353" fill="#ffffff"/>
<rect x="200" y="384" width="210" height="1" fill="#ffffff"/>
<rect x="200" y="526" width="210" height="1" fill="#ffffff"/>
<circle cx="88.5" cy="274.5" r="1.6" fill="none" stroke="#ffe8e8" stroke-width="1.2" />
<rect x="85" y="274" width="7" height="1" fill="#e02020"/>
<rect x="88" y="271" width="1" height="7" fill="#e02020"/>
<circle cx="88.5" cy="286.5" r="1.6" fill="none" stroke="#ffe8e8" stroke-width="1.2" />
<rect x="85" y="286" width="7" height="1" fill="#e02020"/>
<rect x="88" y="283" width="1" height="7" fill="#e02020"/>
<circle cx="88.5" cy="390.5" r="1.6" fill="none" stroke="#ffe8e8" stroke-width="1.2" />
<rect x="85" y="390" width="7" height="1" fill="#e02020"/>
<rect x="88" y="387" width="1" height="7" fill="#e02020"/>
<circle cx="101.5" cy="438.5" r="1.6" fill="none" stroke="#ffe8e8" stroke-width="1.2" />
<rect x="98" y="438" width="7" height="1" fill="#e02020"/>
<rect x="101" y="435" width="1" height="7" fill="#e02020"/>
<circle cx="101.5" cy="472.5" r="1.6" fill="none" stroke="#ffe8e8" stroke-width="1.2" />
<rect x="98" y="472" width="7" height="1" fill="#e02020"/>
<rect x="101" y="469" width="1" height="7" fill="#e02020"/>
<circle cx="88.5" cy="520.5" r="1.6" fill="none" stroke="#ffe8e8" stroke-width="1.2" />
<rect x="85" y="520" width="7" height="1" fill="#e02020"/>
<rect x="88" y="517" width="1" height="7" fill="#e02020"/>
<circle cx="88.5" cy="625.5" r="1.6" fill="none" stroke="#ffe8e8" stroke-width="1.2" />
<rect x="85" y="625" width="7" height="1" fill="#e02020"/>
<rect x="88" y="622" width="1" height="7" fill="#e02020"/>
<circle cx="88.5" cy="636.5" r="1.6" fill="none" stroke="#ffe8e8" stroke-width="1.2" />
<rect x="85" y="636" width="7" height="1" fill="#e02020"/>
<rect x="88" y="633" width="1" height="7" fill="#e02020"/>
<circle cx="522.5" cy="274.5" r="1.6" fill="none" stroke="#ffe8e8" stroke-width="1.2" />
<rect x="519" y="274" width="7" height="1" fill="#e02020"/>
<rect x="522" y="271" width="1" height="7" fill="#e02020"/>
<circle cx="522.5" cy="285.5" r="1.6" fill="none" stroke="#ffe8e8" stroke-width="1.2" />
<rect x="519" y="285" width="7" height="1" fill="#e02020"/>
<rect x="522" y="282" width="1" height="7" fill="#e02020"/>
<circle cx="522.5" cy="390.5" r="1.6" fill="none" stroke="#ffe8e8" stroke-width="1.2" />
<rect x="519" y="390" width="7" height="1" fill="#e02020"/>
<rect x="522" y="387" width="1" height="7" fill="#e02020"/>
<circle cx="508.5" cy="438.5" r="1.6" fill="none" stroke="#ffe8e8" stroke-width="1.2" />
<rect x="505" y="438" width="7" height="1" fill="#e02020"/>
<rect x="508" y="435" width="1" height="7" fill="#e02020"/>
<circle cx="508.5" cy="472.5" r="1.6" fill="none" stroke="#ffe8e8" stroke-width="1.2" />
<rect x="505" y="472" width="7" height="1" fill="#e02020"/>
<rect x="508" y="469" width="1" height="7" fill="#e02020"/>
<circle cx="522.5" cy="520.5" r="1.6" fill="none" stroke="#ffe8e8" stroke-width="1.2" />
<rect x="519" y="520" width="7" height="1" fill="#e02020"/>
<rect x="522" y="517" width="1" height="7" fill="#e02020"/>
<circle cx="522.5" cy="625.5" r="1.6" fill="none" stroke="#ffe8e8" stroke-width="1.2" />
<rect x="519" y="625" width="7" height="1" fill="#e02020"/>
<rect x="522" y="622" width="1" height="7" fill="#e02020"/>
<circle cx="522.5" cy="636.5" r="1.6" fill="none" stroke="#ffe8e8" stroke-width="1.2" />
<rect x="519" y="636" width="7" height="1" fill="#e02020"/>
<rect x="522" y="633" width="1" height="7" fill="#e02020"/>
<circle cx="119.5" cy="455.5" r="2.6" fill="none" stroke="#ffe8e8" stroke-width="1.2" />
<rect x="116" y="455" width="7" height="1" fill="#e02020"/>
<rect x="119" y="452" width="1" height="7" fill="#e02020"/>
<circle cx="491.5" cy="455.5" r="2.6" fill="none" stroke="#ffe8e8" stroke-width="1.2" />
<rect x="488" y="455" width="7" height="1" fill="#e02020"/>
<rect x="491" y="452" width="1" height="7" fill="#e02020"/>
<rect x="201" y="413" width="26" height="6" fill="#20e8e8"/>
<rect x="201" y="492" width="26" height="6" fill="#20e8e8"/>
<rect x="384" y="413" width="25" height="6" fill="#20e8e8"/>
<rect x="384" y="492" width="25" height="6" fill="#20e8e8"/>
<rect x="257" y="301" width="9" height="30" fill="#20e8e8"/>
<rect x="266" y="307" width="3" height="18" fill="#20e8e8"/>
<rect x="344" y="301" width="10" height="30" fill="#20e8e8"/>
<rect x="341" y="307" width="3" height="18" fill="#20e8e8"/>
<rect x="266" y="301" width="78" height="1" fill="#ffffff"/>
<rect x="266" y="330" width="78" height="1" fill="#ffffff"/>
<rect x="269" y="311" width="72" height="11" fill="url(#hc)"/>
<rect x="269" y="310" width="73" height="1" fill="#9ff"/>
<rect x="269" y="322" width="73" height="1" fill="#9ff"/>
<rect x="295" y="305" width="22" height="22" fill="url(#hw)"/>
<rect x="295" y="305" width="22" height="1" fill="#bff"/>
<rect x="295" y="327" width="22" height="1" fill="#bff"/>
<rect x="295" y="305" width="1" height="23" fill="#bff"/>
<rect x="316" y="305" width="1" height="23" fill="#bff"/>
<polygon points="301.5,306.5 305.5,325.5 309.5,306.5" fill="#fff" stroke="#ffffff" stroke-width="1.5"/>
<rect x="259" y="305" width="1" height="1" fill="#044"/>
<rect x="262" y="312" width="1" height="1" fill="#044"/>
<rect x="260" y="320" width="1" height="1" fill="#044"/>
<rect x="263" y="326" width="1" height="1" fill="#044"/>
<rect x="346" y="305" width="1" height="1" fill="#044"/>
<rect x="350" y="312" width="1" height="1" fill="#044"/>
<rect x="347" y="320" width="1" height="1" fill="#044"/>
<rect x="351" y="326" width="1" height="1" fill="#044"/>
<rect x="300" y="327" width="1" height="39" fill="#ffffff"/>
<rect x="310" y="327" width="1" height="39" fill="#ffffff"/>
<rect x="283" y="332" width="45" height="1" fill="#4fc84f"/>
<rect x="283" y="332" width="1" height="9" fill="#4fc84f"/>
<rect x="327" y="332" width="1" height="9" fill="#4fc84f"/>
<rect x="283" y="338" width="17" height="6" fill="url(#hd)"/>
<rect x="311" y="338" width="16" height="6" fill="url(#hd)"/>
<rect x="286" y="334" width="7" height="4" fill="#e020e0"/>
<rect x="289" y="330" width="1" height="19" fill="#e02020"/>
<rect x="321" y="330" width="1" height="19" fill="#e02020"/>
<rect x="293" y="350" width="7" height="16" fill="#18c8d0"/>
<rect x="311" y="350" width="7" height="16" fill="#18c8d0"/>
<polygon points="301.5,337.5 303.5,331.5 308.5,331.5 310.5,337.5" fill="#1ef01e" stroke="#1ef01e" stroke-width="1"/>
<polygon points="301.5,346.5 303.5,340.5 308.5,340.5 310.5,346.5" fill="#1ef01e" stroke="#1ef01e" stroke-width="1"/>
<polygon points="301.5,355.5 303.5,349.5 308.5,349.5 310.5,355.5" fill="#1ef01e" stroke="#1ef01e" stroke-width="1"/>
<polygon points="301.5,364.5 303.5,358.5 308.5,358.5 310.5,364.5" fill="#1ef01e" stroke="#1ef01e" stroke-width="1"/>
<rect x="293" y="349" width="26" height="1" fill="#4fc84f"/>
<rect x="293" y="358" width="26" height="1" fill="#4fc84f"/>
<rect x="292" y="355" width="7" height="1" fill="#e02020"/>
<rect x="295" y="352" width="1" height="7" fill="#e02020"/>
<rect x="312" y="355" width="7" height="1" fill="#e02020"/>
<rect x="315" y="352" width="1" height="7" fill="#e02020"/>
<polyline points="226.5,384.5 226.5,344.5 349.5,344.5 349.5,384.5" fill="none" stroke="#ffffff" stroke-width="1"/>
<polyline points="230.5,384.5 230.5,360.5 347.5,360.5 347.5,384.5" fill="none" stroke="#ffffff" stroke-width="1"/>
<circle cx="275.5" cy="352.5" r="2.5" fill="#20e8e8" stroke="#20e8e8" stroke-width="1" />
<rect x="271" y="352" width="9" height="1" fill="#a03030"/>
<rect x="275" y="348" width="1" height="9" fill="#a03030"/>
<circle cx="335.5" cy="352.5" r="2.5" fill="#20e8e8" stroke="#20e8e8" stroke-width="1" />
<rect x="331" y="352" width="9" height="1" fill="#a03030"/>
<rect x="335" y="348" width="1" height="9" fill="#a03030"/>
<rect x="341" y="345" width="5" height="1" fill="#4fc84f"/>
<rect x="341" y="351" width="5" height="1" fill="#4fc84f"/>
<rect x="341" y="345" width="1" height="7" fill="#4fc84f"/>
<rect x="345" y="345" width="1" height="7" fill="#4fc84f"/>
<rect x="343" y="351" width="1" height="6" fill="#4fc84f"/>
<rect x="319" y="356" width="28" height="1" fill="#4fc84f"/>
<rect x="236" y="365" width="35" height="18" fill="url(#hc)"/>
<rect x="273" y="365" width="25" height="18" fill="url(#hd)"/>
<rect x="312" y="365" width="28" height="18" fill="url(#hd)"/>
<rect x="248" y="362" width="11" height="21" fill="url(#hw)"/>
<rect x="251" y="366" width="2" height="14" fill="#000"/>
<rect x="250" y="366" width="1" height="15" fill="#ffffff"/>
<rect x="253" y="366" width="1" height="15" fill="#ffffff"/>
<rect x="236" y="365" width="105" height="1" fill="#9ff"/>
<rect x="236" y="383" width="105" height="1" fill="#9ff"/>
<rect x="236" y="365" width="1" height="19" fill="#9ff"/>
<rect x="340" y="365" width="1" height="19" fill="#9ff"/>
<rect x="272" y="365" width="1" height="19" fill="#ffffff"/>
<rect x="299" y="365" width="13" height="19" fill="#000"/>
<rect x="299" y="366" width="14" height="1" fill="#ffffff"/>
<rect x="299" y="383" width="14" height="1" fill="#ffffff"/>
<rect x="299" y="366" width="1" height="18" fill="#ffffff"/>
<rect x="312" y="366" width="1" height="18" fill="#ffffff"/>
<rect x="303.5" y="368.5" width="4" height="12" rx="2" fill="none" stroke="#fff" stroke-width="1.2"/>
<rect x="222" y="360" width="1" height="30" fill="#4fc84f"/>
<rect x="221" y="360" width="10" height="1" fill="#4fc84f"/>
<rect x="213" y="388" width="18" height="1" fill="#4fc84f"/>
<rect x="219" y="374" width="3" height="3" fill="#1ef01e"/>
<rect x="217" y="380" width="2" height="14" fill="#4fc84f"/>
<rect x="239" y="344" width="1" height="17" fill="#4fc84f"/>
<rect x="238" y="344" width="6" height="1" fill="#4fc84f"/>
<rect x="238" y="360" width="6" height="1" fill="#4fc84f"/>
<rect x="236" y="351" width="3" height="3" fill="#1ef01e"/>
<rect x="231" y="385" width="46" height="1" fill="#ffffff"/>
<rect x="231" y="389" width="46" height="1" fill="#ffffff"/>
<rect x="231" y="385" width="1" height="5" fill="#ffffff"/>
<rect x="276" y="385" width="1" height="5" fill="#ffffff"/>
<rect x="241" y="389" width="1" height="21" fill="#ffffff"/>
<rect x="266" y="389" width="1" height="21" fill="#ffffff"/>
<rect x="235" y="400" width="38" height="1" fill="#4fc84f"/>
<rect x="235" y="385" width="1" height="18" fill="#4fc84f"/>
<rect x="272" y="385" width="1" height="18" fill="#4fc84f"/>
<rect x="252" y="398" width="3" height="3" fill="#1ef01e"/>
<rect x="294" y="383" width="23" height="1" fill="#ffffff"/>
<rect x="294" y="388" width="23" height="1" fill="#ffffff"/>
<rect x="294" y="383" width="1" height="6" fill="#ffffff"/>
<rect x="316" y="383" width="1" height="6" fill="#ffffff"/>
<rect x="300" y="388" width="1" height="11" fill="#ffffff"/>
<rect x="310" y="388" width="1" height="11" fill="#ffffff"/>
<rect x="232" y="409" width="44" height="1" fill="#ffffff"/>
<rect x="232" y="514" width="44" height="1" fill="#ffffff"/>
<rect x="232" y="409" width="1" height="106" fill="#ffffff"/>
<rect x="275" y="409" width="1" height="106" fill="#ffffff"/>
<rect x="232" y="431" width="44" height="1" fill="#ffffff"/>
<rect x="232" y="434" width="44" height="1" fill="#ffffff"/>
<rect x="232" y="491" width="44" height="1" fill="#ffffff"/>
<rect x="236" y="434" width="1" height="58" fill="#ffffff"/>
<rect x="271" y="434" width="1" height="58" fill="#ffffff"/>
<rect x="232" y="474" width="5" height="1" fill="#ffffff"/>
<rect x="232" y="478" width="5" height="1" fill="#ffffff"/>
<rect x="271" y="474" width="5" height="1" fill="#ffffff"/>
<rect x="271" y="478" width="5" height="1" fill="#ffffff"/>
<rect x="234" y="424" width="41" height="1" fill="#4fc84f"/>
<rect x="252" y="421" width="3" height="3" fill="#1ef01e"/>
<rect x="234" y="424" width="1" height="13" fill="#e02020"/>
<rect x="274" y="424" width="1" height="13" fill="#e02020"/>
<circle cx="241.5" cy="503.5" r="3" fill="none" stroke="#ffffff" stroke-width="1" />
<circle cx="262.5" cy="503.5" r="3" fill="none" stroke="#ffffff" stroke-width="1" />
<line x1="254.5" y1="362" x2="254.5" y2="520" stroke="#e02020" stroke-dasharray="16 2 3 2"/>
<rect x="276" y="397" width="59" height="1" fill="#ffffff"/>
<rect x="276" y="419" width="59" height="1" fill="#ffffff"/>
<rect x="276" y="397" width="1" height="23" fill="#ffffff"/>
<rect x="334" y="397" width="1" height="23" fill="#ffffff"/>
<rect x="293" y="397" width="1" height="23" fill="#ffffff"/>
<rect x="305" y="397" width="1" height="23" fill="#ffffff"/>
<rect x="309" y="397" width="9" height="23" fill="#18c8d0"/>
<rect x="311" y="400" width="1" height="1" fill="#033"/>
<rect x="314" y="405" width="1" height="1" fill="#033"/>
<rect x="312" y="410" width="1" height="1" fill="#033"/>
<rect x="315" y="414" width="1" height="1" fill="#033"/>
<circle cx="281.5" cy="408.5" r="3" fill="none" stroke="#e02020" stroke-width="1" />
<rect x="277" y="408" width="9" height="1" fill="#e02020"/>
<rect x="281" y="404" width="1" height="9" fill="#e02020"/>
<circle cx="290.5" cy="408.5" r="3.5" fill="none" stroke="#ffffff" stroke-width="1.2" />
<rect x="286" y="408" width="9" height="1" fill="#e02020"/>
<rect x="290" y="404" width="1" height="9" fill="#e02020"/>
<polyline points="290.5,403.5 296.5,403.5 296.5,413.5 290.5,413.5" fill="none" stroke="#ffffff" stroke-width="1"/>
<path d="M318.5,404 a4.5,4.5 0 0 1 0,9" stroke="#fff" fill="none" stroke-width="1.2"/>
<circle cx="330.0" cy="408.5" r="2.3" fill="#20e8e8" stroke="#20e8e8" stroke-width="1" />
<rect x="325" y="408" width="10" height="1" fill="#e02020"/>
<rect x="329" y="403" width="1" height="11" fill="#e02020"/>
<rect x="309" y="408" width="8" height="1" fill="#e02020"/>
<rect x="276" y="491" width="59" height="1" fill="#ffffff"/>
<rect x="276" y="514" width="59" height="1" fill="#ffffff"/>
<rect x="276" y="491" width="1" height="24" fill="#ffffff"/>
<rect x="334" y="491" width="1" height="24" fill="#ffffff"/>
<rect x="293" y="491" width="1" height="24" fill="#ffffff"/>
<rect x="305" y="491" width="1" height="24" fill="#ffffff"/>
<rect x="309" y="491" width="9" height="24" fill="#18c8d0"/>
<rect x="311" y="494" width="1" height="1" fill="#033"/>
<rect x="314" y="499" width="1" height="1" fill="#033"/>
<rect x="312" y="504" width="1" height="1" fill="#033"/>
<rect x="315" y="508" width="1" height="1" fill="#033"/>
<circle cx="281.5" cy="503.5" r="3" fill="none" stroke="#e02020" stroke-width="1" />
<rect x="277" y="503" width="9" height="1" fill="#e02020"/>
<rect x="281" y="499" width="1" height="9" fill="#e02020"/>
<circle cx="290.5" cy="503.5" r="3.5" fill="none" stroke="#ffffff" stroke-width="1.2" />
<rect x="286" y="503" width="9" height="1" fill="#e02020"/>
<rect x="290" y="499" width="1" height="9" fill="#e02020"/>
<polyline points="290.5,498.5 296.5,498.5 296.5,508.5 290.5,508.5" fill="none" stroke="#ffffff" stroke-width="1"/>
<path d="M318.5,499 a4.5,4.5 0 0 1 0,9" stroke="#fff" fill="none" stroke-width="1.2"/>
<circle cx="330.0" cy="503.5" r="2.3" fill="#20e8e8" stroke="#20e8e8" stroke-width="1" />
<rect x="325" y="503" width="10" height="1" fill="#e02020"/>
<rect x="329" y="498" width="1" height="11" fill="#e02020"/>
<rect x="309" y="503" width="8" height="1" fill="#e02020"/>
<rect x="300" y="419" width="10" height="1" fill="#ffffff"/>
<rect x="300" y="427" width="10" height="1" fill="#ffffff"/>
<rect x="300" y="419" width="1" height="9" fill="#ffffff"/>
<rect x="309" y="419" width="1" height="9" fill="#ffffff"/>
<rect x="300" y="483" width="11" height="1" fill="#ffffff"/>
<rect x="300" y="491" width="11" height="1" fill="#ffffff"/>
<rect x="300" y="483" width="1" height="9" fill="#ffffff"/>
<rect x="310" y="483" width="1" height="9" fill="#ffffff"/>
<rect x="295" y="425" width="26" height="1" fill="#4fc84f"/>
<rect x="313" y="422" width="4" height="4" fill="#1ef01e"/>
<rect x="320" y="425" width="1" height="19" fill="#4fc84f"/>
<rect x="312" y="443" width="9" height="1" fill="#4fc84f"/>
<rect x="288" y="439" width="25" height="7" fill="#1ef01e"/>
<rect x="292" y="441" width="4" height="4" fill="#0a0"/>
<rect x="299" y="441" width="4" height="4" fill="#0a0"/>
<rect x="306" y="441" width="4" height="4" fill="#0a0"/>
<rect x="286" y="458" width="25" height="6" fill="#1ef01e"/>
<rect x="297" y="460" width="4" height="3" fill="#0a0"/>
<rect x="304" y="460" width="4" height="3" fill="#0a0"/>
<rect x="286" y="464" width="6" height="3" fill="#1ef01e"/>
<rect x="311" y="460" width="13" height="1" fill="#4fc84f"/>
<rect x="323" y="460" width="1" height="27" fill="#4fc84f"/>
<rect x="291" y="486" width="33" height="1" fill="#4fc84f"/>
<rect x="291" y="484" width="4" height="4" fill="#1ef01e"/>
<line x1="272" y1="455.5" x2="338" y2="455.5" stroke="#e02020" stroke-dasharray="12 2 3 2"/>
<line x1="305.5" y1="300" x2="305.5" y2="600" stroke="#e02020" stroke-dasharray="18 2 3 2"/>
<rect x="334" y="398" width="44" height="1" fill="#ffffff"/>
<rect x="334" y="501" width="44" height="1" fill="#ffffff"/>
<rect x="334" y="398" width="1" height="104" fill="#ffffff"/>
<rect x="377" y="398" width="1" height="104" fill="#ffffff"/>
<rect x="338" y="398" width="1" height="79" fill="#ffffff"/>
<rect x="373" y="398" width="1" height="79" fill="#ffffff"/>
<rect x="334" y="476" width="44" height="1" fill="#ffffff"/>
<rect x="334" y="479" width="44" height="1" fill="#ffffff"/>
<rect x="342" y="501" width="28" height="1" fill="#ffffff"/>
<rect x="342" y="521" width="28" height="1" fill="#ffffff"/>
<rect x="342" y="501" width="1" height="21" fill="#ffffff"/>
<rect x="369" y="501" width="1" height="21" fill="#ffffff"/>
<circle cx="347.5" cy="407.5" r="2.5" fill="none" stroke="#ffffff" stroke-width="1" />
<circle cx="369.5" cy="407.5" r="2.5" fill="none" stroke="#ffffff" stroke-width="1" />
<line x1="356.5" y1="391" x2="356.5" y2="556" stroke="#e02020" stroke-dasharray="16 2 3 2"/>
<rect x="338" y="470" width="1" height="13" fill="#e02020"/>
<rect x="375" y="470" width="1" height="13" fill="#e02020"/>
<rect x="437" y="413" width="1" height="86" fill="#4fc84f"/>
<rect x="409" y="413" width="31" height="1" fill="#4fc84f"/>
<rect x="409" y="498" width="31" height="1" fill="#4fc84f"/>
<rect x="432" y="454" width="4" height="4" fill="#1ef01e"/>
<rect x="399" y="384" width="1" height="30" fill="#4fc84f"/>
<rect x="396" y="384" width="7" height="1" fill="#4fc84f"/>
<rect x="395" y="397" width="4" height="4" fill="#1ef01e"/>
<rect x="382" y="405" width="2" height="16" fill="#4fc84f"/>
<rect x="380" y="413" width="8" height="1" fill="#4fc84f"/>
<rect x="261" y="526" width="121" height="1" fill="#000"/>
<rect x="260" y="526" width="1" height="26" fill="#ffffff"/>
<rect x="263" y="526" width="1" height="26" fill="#ffffff"/>
<rect x="381" y="526" width="1" height="26" fill="#ffffff"/>
<rect x="263" y="551" width="119" height="1" fill="#ffffff"/>
<rect x="331" y="521" width="51" height="1" fill="#ffffff"/>
<rect x="331" y="526" width="51" height="1" fill="#ffffff"/>
<rect x="331" y="521" width="1" height="6" fill="#ffffff"/>
<rect x="381" y="521" width="1" height="6" fill="#ffffff"/>
<rect x="337" y="515" width="1" height="12" fill="#e02020"/>
<rect x="375" y="515" width="1" height="12" fill="#e02020"/>
<rect x="295" y="523" width="22" height="1" fill="#ffffff"/>
<rect x="295" y="527" width="22" height="1" fill="#ffffff"/>
<rect x="295" y="523" width="1" height="5" fill="#ffffff"/>
<rect x="316" y="523" width="1" height="5" fill="#ffffff"/>
<rect x="300" y="514" width="1" height="10" fill="#ffffff"/>
<rect x="310" y="514" width="1" height="10" fill="#ffffff"/>
<rect x="271" y="529" width="27" height="15" fill="url(#hd)"/>
<rect x="315" y="529" width="22" height="15" fill="url(#hd)"/>
<rect x="339" y="529" width="35" height="15" fill="url(#hc)"/>
<rect x="271" y="529" width="67" height="1" fill="#9ff"/>
<rect x="271" y="544" width="67" height="1" fill="#9ff"/>
<rect x="271" y="529" width="1" height="16" fill="#9ff"/>
<rect x="337" y="529" width="1" height="16" fill="#9ff"/>
<rect x="339" y="529" width="36" height="1" fill="#9ff"/>
<rect x="339" y="544" width="36" height="1" fill="#9ff"/>
<rect x="339" y="529" width="1" height="16" fill="#9ff"/>
<rect x="374" y="529" width="1" height="16" fill="#9ff"/>
<rect x="298" y="528" width="18" height="17" fill="#000"/>
<rect x="298" y="528" width="18" height="1" fill="#ffffff"/>
<rect x="298" y="544" width="18" height="1" fill="#ffffff"/>
<rect x="298" y="528" width="1" height="17" fill="#ffffff"/>
<rect x="315" y="528" width="1" height="17" fill="#ffffff"/>
<rect x="302.5" y="531.5" width="5" height="11" rx="2.5" fill="none" stroke="#fff" stroke-width="1.2"/>
<rect x="353" y="531" width="8" height="13" fill="#000"/>
<rect x="355" y="531" width="1" height="13" fill="#ffffff"/>
<rect x="358" y="531" width="2" height="13" fill="#aaa"/>
<rect x="352" y="540" width="9" height="8" fill="#18c8d0"/>
<rect x="355" y="544" width="4" height="4" fill="#ffffff"/>
<rect x="296" y="544" width="4" height="24" fill="#18c8d0"/>
<rect x="310" y="544" width="8" height="24" fill="#18c8d0"/>
<rect x="283" y="568" width="17" height="5" fill="#18c8d0"/>
<rect x="310" y="568" width="17" height="5" fill="#18c8d0"/>
<rect x="300" y="544" width="10" height="56" fill="#000"/>
<rect x="300" y="544" width="1" height="38" fill="#ffffff"/>
<rect x="310" y="544" width="1" height="38" fill="#ffffff"/>
<rect x="301" y="552" width="8" height="5" fill="#1ef01e"/>
<rect x="323" y="545" width="6" height="1" fill="#4fc84f"/>
<rect x="323" y="551" width="6" height="1" fill="#4fc84f"/>
<rect x="323" y="545" width="1" height="7" fill="#4fc84f"/>
<rect x="328" y="545" width="1" height="7" fill="#4fc84f"/>
<rect x="325" y="551" width="1" height="6" fill="#4fc84f"/>
<rect x="296" y="556" width="34" height="1" fill="#4fc84f"/>
<rect x="291" y="555" width="7" height="1" fill="#e02020"/>
<rect x="294" y="552" width="1" height="7" fill="#e02020"/>
<rect x="312" y="555" width="7" height="1" fill="#e02020"/>
<rect x="315" y="552" width="1" height="7" fill="#e02020"/>
<rect x="286" y="573" width="7" height="5" fill="#e020e0"/>
<rect x="289" y="560" width="1" height="16" fill="#e02020"/>
<rect x="321" y="562" width="1" height="19" fill="#e02020"/>
<rect x="260" y="567" width="123" height="1" fill="#ffffff"/>
<circle cx="275.5" cy="559.5" r="1.8000000000000003" fill="none" stroke="#ffe8e8" stroke-width="1.2" />
<rect x="272" y="559" width="7" height="1" fill="#e02020"/>
<rect x="275" y="556" width="1" height="7" fill="#e02020"/>
<circle cx="335.5" cy="559.5" r="1.8000000000000003" fill="none" stroke="#ffe8e8" stroke-width="1.2" />
<rect x="332" y="559" width="7" height="1" fill="#e02020"/>
<rect x="335" y="556" width="1" height="7" fill="#e02020"/>
<rect x="268" y="554" width="2" height="18" fill="#4fc84f"/>
<rect x="264" y="562" width="4" height="4" fill="#1ef01e"/>
<rect x="264" y="563" width="9" height="1" fill="#4fc84f"/>
<rect x="257" y="581" width="98" height="1" fill="#ffffff"/>
<rect x="257" y="609" width="98" height="1" fill="#ffffff"/>
<rect x="257" y="581" width="1" height="29" fill="#ffffff"/>
<rect x="354" y="581" width="1" height="29" fill="#ffffff"/>
<rect x="260" y="567" width="1" height="55" fill="#4fc84f"/>
<rect x="383" y="551" width="1" height="71" fill="#4fc84f"/>
<rect x="305" y="581" width="1" height="34" fill="#4fc84f"/>
<rect x="356" y="556" width="1" height="38" fill="#4fc84f"/>
<rect x="305" y="591" width="52" height="1" fill="#4fc84f"/>
<rect x="328" y="588" width="4" height="4" fill="#1ef01e"/>
<rect x="305" y="613" width="79" height="1" fill="#4fc84f"/>
<rect x="344" y="610" width="4" height="4" fill="#1ef01e"/>
<rect x="260" y="619" width="124" height="1" fill="#4fc84f"/>
<rect x="320" y="616" width="4" height="4" fill="#1ef01e"/>
<rect x="201" y="624" width="209" height="1" fill="#4fc84f"/>
<rect x="303" y="621" width="5" height="5" fill="#1ef01e"/>
<line x1="305.5" y1="560" x2="305.5" y2="603" stroke="#e02020"/>
<line x1="98.5" y1="246.5" x2="281.5" y2="407.5" stroke="#ffffff" stroke-width="1" />
<line x1="133.5" y1="246.5" x2="273.5" y2="351.5" stroke="#ffffff" stroke-width="1" />
<line x1="171.5" y1="246.5" x2="295.5" y2="355.5" stroke="#ffffff" stroke-width="1" />
<line x1="209.5" y1="246.5" x2="290.5" y2="342.5" stroke="#ffffff" stroke-width="1" />
<line x1="246.5" y1="246.5" x2="293.5" y2="338.5" stroke="#ffffff" stroke-width="1" />
<line x1="271.5" y1="246.5" x2="300.5" y2="335.5" stroke="#ffffff" stroke-width="1" />
<line x1="293.5" y1="246.5" x2="302.5" y2="333.5" stroke="#ffffff" stroke-width="1" />
<line x1="314.5" y1="246.5" x2="303.5" y2="305.5" stroke="#ffffff" stroke-width="1" />
<line x1="350.5" y1="246.5" x2="314.5" y2="307.5" stroke="#ffffff" stroke-width="1" />
<line x1="402.5" y1="246.5" x2="354.5" y2="310.5" stroke="#ffffff" stroke-width="1" />
<polyline points="323.5,246.5 325.5,249.5 327.5,246.5" fill="none" stroke="#ffffff" stroke-width="1"/>
<rect x="89" y="675" width="11" height="1" fill="#ffffff"/>
<rect x="93" y="671" width="2" height="4" fill="#ffffff"/>
<rect x="129" y="675" width="11" height="1" fill="#ffffff"/>
<rect x="133" y="671" width="2" height="4" fill="#ffffff"/>
<rect x="274" y="675" width="11" height="1" fill="#ffffff"/>
<rect x="278" y="671" width="3" height="4" fill="#ffffff"/>
<line x1="99.5" y1="675.5" x2="234.5" y2="435.5" stroke="#ffffff" stroke-width="1" />
<line x1="139.5" y1="675.5" x2="276.5" y2="541.5" stroke="#ffffff" stroke-width="1" />
<line x1="284.5" y1="675.5" x2="356.5" y2="548.5" stroke="#ffffff" stroke-width="1" />
<rect x="381" y="675" width="22" height="1" fill="#ffffff"/>
<rect x="385" y="671" width="2" height="4" fill="#ffffff"/>
<rect x="397" y="671" width="2" height="4" fill="#ffffff"/>
<polyline points="388.5,675.5 391.5,678.5 394.5,675.5" fill="none" stroke="#ffffff" stroke-width="1"/>
<line x1="381.5" y1="675.5" x2="360.5" y2="548.5" stroke="#ffffff" stroke-width="1" />
<rect x="451" y="675" width="9" height="1" fill="#ffffff"/>
<rect x="455" y="671" width="3" height="4" fill="#ffffff"/>
<line x1="451.5" y1="675.5" x2="369.5" y2="544.5" stroke="#ffffff" stroke-width="1" />
<rect x="508" y="365" width="15" height="1" fill="#ffffff"/>
<rect x="508" y="379" width="15" height="1" fill="#ffffff"/>
<rect x="508" y="365" width="1" height="15" fill="#ffffff"/>
<rect x="522" y="365" width="1" height="15" fill="#ffffff"/>
<rect x="508" y="372" width="15" height="1" fill="#ffffff"/>
<rect x="515" y="365" width="1" height="15" fill="#ffffff"/>
<rect x="515" y="304" width="1" height="62" fill="#ffffff"/>
<polygon points="508.5,304.5 522.5,304.5 515.5,285.5" fill="none" stroke="#ffffff" stroke-width="1"/>
<line x1="515.5" y1="304.5" x2="512.5" y2="290.5" stroke="#888" stroke-width="1" />
<line x1="515.5" y1="304.5" x2="518.5" y2="290.5" stroke="#888" stroke-width="1" />
<rect x="522" y="372" width="63" height="1" fill="#ffffff"/>
<polygon points="584.5,366.5 584.5,378.5 601.5,372.5" fill="none" stroke="#ffffff" stroke-width="1"/>
<line x1="584.5" y1="372.5" x2="598.5" y2="370.5" stroke="#888" stroke-width="1" />
<line x1="584.5" y1="372.5" x2="598.5" y2="374.5" stroke="#888" stroke-width="1" />
<text x="510" y="274.5" font-size="26" textLength="13" font-family="'DejaVu Sans','Liberation Sans',sans-serif" font-weight="200" fill="#fff" lengthAdjust="spacingAndGlyphs">Y</text>
<text x="616" y="382.5" font-size="25" textLength="12.5" font-family="'DejaVu Sans','Liberation Sans',sans-serif" font-weight="200" fill="#fff" lengthAdjust="spacingAndGlyphs">X</text>
<text x="702" y="492" font-size="6" font-weight="bold" fill="#30e030" textLength="19" lengthAdjust="spacingAndGlyphs">技术要求</text>
<rect x="635" y="495" width="62" height="5" fill="#1ef01e"/>
<rect x="635" y="502" width="83" height="4" fill="#1ef01e"/>
<rect x="635" y="508" width="154" height="4" fill="#1ef01e"/>
<rect x="636" y="514" width="46" height="4" fill="#1ef01e"/>
<rect x="849" y="492" width="154" height="1" fill="#ffffff"/>
<rect x="849" y="498" width="154" height="1" fill="#ffffff"/>
<rect x="849" y="504" width="154" height="1" fill="#ffffff"/>
<rect x="849" y="510" width="154" height="1" fill="#ffffff"/>
<rect x="849" y="516" width="154" height="1" fill="#ffffff"/>
<rect x="849" y="522" width="154" height="1" fill="#ffffff"/>
<rect x="849" y="528" width="154" height="1" fill="#ffffff"/>
<rect x="849" y="534" width="154" height="1" fill="#ffffff"/>
<rect x="849" y="540" width="154" height="1" fill="#ffffff"/>
<rect x="849" y="546" width="154" height="1" fill="#ffffff"/>
<rect x="849" y="552" width="154" height="1" fill="#ffffff"/>
<rect x="849" y="558" width="154" height="1" fill="#ffffff"/>
<rect x="849" y="564" width="154" height="1" fill="#ffffff"/>
<rect x="849" y="570" width="154" height="1" fill="#ffffff"/>
<rect x="849" y="576" width="154" height="1" fill="#ffffff"/>
<rect x="849" y="582" width="154" height="1" fill="#ffffff"/>
<rect x="849" y="588" width="154" height="1" fill="#ffffff"/>
<rect x="849" y="594" width="154" height="1" fill="#ffffff"/>
<rect x="849" y="600" width="154" height="1" fill="#ffffff"/>
<rect x="849" y="606" width="154" height="1" fill="#ffffff"/>
<rect x="849" y="612" width="154" height="1" fill="#ffffff"/>
<rect x="849" y="618" width="154" height="1" fill="#ffffff"/>
<rect x="849" y="624" width="154" height="1" fill="#ffffff"/>
<rect x="849" y="630" width="154" height="1" fill="#ffffff"/>
<rect x="849" y="636" width="154" height="1" fill="#ffffff"/>
<rect x="849" y="642" width="154" height="1" fill="#ffffff"/>
<rect x="849" y="648" width="154" height="1" fill="#ffffff"/>
<rect x="849" y="654" width="154" height="1" fill="#ffffff"/>
<rect x="849" y="492" width="1" height="173" fill="#ffffff"/>
<rect x="857" y="492" width="1" height="173" fill="#ffffff"/>
<rect x="890" y="492" width="1" height="173" fill="#ffffff"/>
<rect x="928" y="492" width="1" height="173" fill="#ffffff"/>
<rect x="934" y="492" width="1" height="173" fill="#ffffff"/>
<rect x="967" y="492" width="1" height="173" fill="#ffffff"/>
<rect x="975" y="492" width="1" height="173" fill="#ffffff"/>
<rect x="985" y="492" width="1" height="173" fill="#ffffff"/>
<rect x="1002" y="492" width="1" height="173" fill="#ffffff"/>
<rect x="851" y="492" width="1" height="163" fill="#ffffff"/>
<rect x="930" y="492" width="1" height="163" fill="#ffffff"/>
<rect x="851" y="494" width="4" height="1" fill="#ffffff"/>
<rect x="854" y="494" width="1" height="4" fill="#ffffff"/>
<rect x="859" y="494" width="21" height="4" fill="#ffffff"/>
<rect x="891" y="494" width="23" height="4" fill="#ffffff"/>
<rect x="931" y="493" width="1" height="4" fill="#ffffff"/>
<rect x="936" y="494" width="7" height="4" fill="#ffffff"/>
<rect x="851" y="500" width="4" height="1" fill="#ffffff"/>
<rect x="854" y="500" width="1" height="4" fill="#ffffff"/>
<rect x="859" y="500" width="12" height="4" fill="#ffffff"/>
<rect x="891" y="500" width="15" height="4" fill="#ffffff"/>
<rect x="931" y="499" width="1" height="4" fill="#ffffff"/>
<rect x="936" y="500" width="9" height="4" fill="#ffffff"/>
<rect x="851" y="506" width="4" height="1" fill="#ffffff"/>
<rect x="854" y="506" width="1" height="4" fill="#ffffff"/>
<rect x="859" y="506" width="12" height="4" fill="#ffffff"/>
<rect x="891" y="506" width="35" height="4" fill="#ffffff"/>
<rect x="931" y="505" width="1" height="4" fill="#ffffff"/>
<rect x="851" y="512" width="4" height="1" fill="#ffffff"/>
<rect x="854" y="512" width="1" height="4" fill="#ffffff"/>
<rect x="859" y="512" width="12" height="4" fill="#ffffff"/>
<rect x="891" y="512" width="16" height="4" fill="#ffffff"/>
<rect x="931" y="511" width="1" height="4" fill="#ffffff"/>
<rect x="851" y="518" width="4" height="1" fill="#ffffff"/>
<rect x="854" y="518" width="1" height="4" fill="#ffffff"/>
<rect x="859" y="518" width="18" height="4" fill="#ffffff"/>
<rect x="891" y="518" width="24" height="4" fill="#ffffff"/>
<rect x="931" y="517" width="1" height="4" fill="#ffffff"/>
<rect x="936" y="518" width="7" height="4" fill="#ffffff"/>
<rect x="851" y="524" width="4" height="1" fill="#ffffff"/>
<rect x="854" y="524" width="1" height="4" fill="#ffffff"/>
<rect x="859" y="524" width="21" height="4" fill="#ffffff"/>
<rect x="891" y="524" width="23" height="4" fill="#ffffff"/>
<rect x="931" y="523" width="1" height="4" fill="#ffffff"/>
<rect x="936" y="524" width="7" height="4" fill="#ffffff"/>
<rect x="851" y="530" width="4" height="1" fill="#ffffff"/>
<rect x="854" y="530" width="1" height="4" fill="#ffffff"/>
<rect x="859" y="530" width="23" height="4" fill="#ffffff"/>
<rect x="891" y="530" width="35" height="4" fill="#ffffff"/>
<rect x="931" y="529" width="1" height="4" fill="#ffffff"/>
<rect x="936" y="530" width="7" height="4" fill="#ffffff"/>
<rect x="851" y="536" width="4" height="1" fill="#ffffff"/>
<rect x="854" y="536" width="1" height="4" fill="#ffffff"/>
<rect x="859" y="536" width="18" height="4" fill="#ffffff"/>
<rect x="891" y="536" width="35" height="4" fill="#ffffff"/>
<rect x="931" y="535" width="1" height="4" fill="#ffffff"/>
<rect x="936" y="536" width="11" height="4" fill="#ffffff"/>
<rect x="851" y="542" width="4" height="1" fill="#ffffff"/>
<rect x="854" y="542" width="1" height="4" fill="#ffffff"/>
<rect x="859" y="542" width="21" height="5" fill="#ffffff"/>
<rect x="891" y="542" width="24" height="4" fill="#ffffff"/>
<rect x="931" y="541" width="1" height="4" fill="#ffffff"/>
<rect x="936" y="542" width="7" height="4" fill="#ffffff"/>
<rect x="851" y="548" width="4" height="1" fill="#ffffff"/>
<rect x="854" y="548" width="1" height="4" fill="#ffffff"/>
<rect x="859" y="547" width="18" height="6" fill="#ffffff"/>
<rect x="891" y="548" width="21" height="4" fill="#ffffff"/>
<rect x="931" y="547" width="1" height="4" fill="#ffffff"/>
<rect x="936" y="548" width="4" height="4" fill="#ffffff"/>
<rect x="851" y="554" width="4" height="1" fill="#ffffff"/>
<rect x="854" y="554" width="1" height="4" fill="#ffffff"/>
<rect x="859" y="553" width="18" height="6" fill="#ffffff"/>
<rect x="891" y="554" width="35" height="4" fill="#ffffff"/>
<rect x="931" y="553" width="1" height="4" fill="#ffffff"/>
<rect x="936" y="554" width="7" height="4" fill="#ffffff"/>
<rect x="851" y="560" width="4" height="1" fill="#ffffff"/>
<rect x="854" y="560" width="1" height="4" fill="#ffffff"/>
<rect x="859" y="559" width="12" height="5" fill="#ffffff"/>
<rect x="891" y="560" width="2" height="4" fill="#ffffff"/>
<rect x="931" y="559" width="1" height="4" fill="#ffffff"/>
<rect x="936" y="560" width="4" height="4" fill="#ffffff"/>
<rect x="851" y="566" width="4" height="1" fill="#ffffff"/>
<rect x="854" y="566" width="1" height="4" fill="#ffffff"/>
<rect x="859" y="566" width="12" height="4" fill="#ffffff"/>
<rect x="891" y="566" width="18" height="4" fill="#ffffff"/>
<rect x="931" y="565" width="1" height="4" fill="#ffffff"/>
<rect x="936" y="566" width="4" height="4" fill="#ffffff"/>
<rect x="851" y="572" width="4" height="1" fill="#ffffff"/>
<rect x="854" y="572" width="1" height="4" fill="#ffffff"/>
<rect x="859" y="572" width="12" height="4" fill="#ffffff"/>
<rect x="891" y="572" width="9" height="4" fill="#ffffff"/>
<rect x="931" y="571" width="1" height="4" fill="#ffffff"/>
<rect x="936" y="572" width="7" height="4" fill="#ffffff"/>
<rect x="851" y="578" width="4" height="1" fill="#ffffff"/>
<rect x="854" y="578" width="1" height="4" fill="#ffffff"/>
<rect x="859" y="578" width="12" height="4" fill="#ffffff"/>
<rect x="891" y="578" width="9" height="4" fill="#ffffff"/>
<rect x="931" y="577" width="1" height="4" fill="#ffffff"/>
<rect x="936" y="578" width="20" height="4" fill="#ffffff"/>
<rect x="851" y="584" width="4" height="1" fill="#ffffff"/>
<rect x="854" y="584" width="1" height="4" fill="#ffffff"/>
<rect x="859" y="584" width="12" height="4" fill="#ffffff"/>
<rect x="891" y="584" width="9" height="4" fill="#ffffff"/>
<rect x="931" y="583" width="1" height="4" fill="#ffffff"/>
<rect x="936" y="584" width="7" height="4" fill="#ffffff"/>
<rect x="851" y="590" width="4" height="1" fill="#ffffff"/>
<rect x="854" y="590" width="1" height="4" fill="#ffffff"/>
<rect x="859" y="590" width="23" height="4" fill="#ffffff"/>
<rect x="891" y="590" width="12" height="4" fill="#ffffff"/>
<rect x="931" y="589" width="1" height="4" fill="#ffffff"/>
<rect x="936" y="590" width="8" height="4" fill="#ffffff"/>
<rect x="851" y="596" width="4" height="1" fill="#ffffff"/>
<rect x="854" y="596" width="1" height="4" fill="#ffffff"/>
<rect x="859" y="596" width="12" height="4" fill="#ffffff"/>
<rect x="891" y="596" width="12" height="4" fill="#ffffff"/>
<rect x="931" y="595" width="1" height="4" fill="#ffffff"/>
<rect x="936" y="596" width="7" height="4" fill="#ffffff"/>
<rect x="851" y="602" width="4" height="1" fill="#ffffff"/>
<rect x="854" y="602" width="1" height="4" fill="#ffffff"/>
<rect x="859" y="602" width="20" height="4" fill="#ffffff"/>
<rect x="891" y="602" width="21" height="4" fill="#ffffff"/>
<rect x="931" y="601" width="1" height="4" fill="#ffffff"/>
<rect x="936" y="602" width="9" height="4" fill="#ffffff"/>
<rect x="851" y="608" width="4" height="1" fill="#ffffff"/>
<rect x="854" y="608" width="1" height="4" fill="#ffffff"/>
<rect x="859" y="608" width="12" height="4" fill="#ffffff"/>
<rect x="891" y="608" width="6" height="4" fill="#ffffff"/>
<rect x="931" y="607" width="1" height="4" fill="#ffffff"/>
<rect x="936" y="608" width="9" height="4" fill="#ffffff"/>
<rect x="851" y="614" width="4" height="1" fill="#ffffff"/>
<rect x="854" y="614" width="1" height="4" fill="#ffffff"/>
<rect x="859" y="614" width="12" height="4" fill="#ffffff"/>
<rect x="891" y="614" width="9" height="4" fill="#ffffff"/>
<rect x="931" y="613" width="1" height="4" fill="#ffffff"/>
<rect x="936" y="614" width="9" height="4" fill="#ffffff"/>
<rect x="851" y="620" width="4" height="1" fill="#ffffff"/>
<rect x="854" y="620" width="1" height="4" fill="#ffffff"/>
<rect x="859" y="620" width="12" height="4" fill="#ffffff"/>
<rect x="891" y="620" width="9" height="4" fill="#ffffff"/>
<rect x="931" y="619" width="1" height="4" fill="#ffffff"/>
<rect x="936" y="620" width="7" height="4" fill="#ffffff"/>
<rect x="851" y="626" width="4" height="1" fill="#ffffff"/>
<rect x="854" y="626" width="1" height="4" fill="#ffffff"/>
<rect x="859" y="626" width="12" height="4" fill="#ffffff"/>
<rect x="891" y="626" width="28" height="4" fill="#ffffff"/>
<rect x="931" y="625" width="1" height="4" fill="#ffffff"/>
<rect x="936" y="626" width="7" height="4" fill="#ffffff"/>
<rect x="851" y="632" width="4" height="1" fill="#ffffff"/>
<rect x="854" y="632" width="1" height="4" fill="#ffffff"/>
<rect x="859" y="632" width="23" height="4" fill="#ffffff"/>
<rect x="891" y="632" width="35" height="4" fill="#ffffff"/>
<rect x="931" y="631" width="1" height="4" fill="#ffffff"/>
<rect x="936" y="632" width="7" height="4" fill="#ffffff"/>
<rect x="851" y="638" width="4" height="1" fill="#ffffff"/>
<rect x="854" y="638" width="1" height="4" fill="#ffffff"/>
<rect x="859" y="638" width="18" height="4" fill="#ffffff"/>
<rect x="891" y="638" width="23" height="4" fill="#ffffff"/>
<rect x="931" y="637" width="1" height="4" fill="#ffffff"/>
<rect x="936" y="638" width="11" height="4" fill="#ffffff"/>
<rect x="851" y="644" width="4" height="1" fill="#ffffff"/>
<rect x="854" y="644" width="1" height="4" fill="#ffffff"/>
<rect x="859" y="644" width="21" height="4" fill="#ffffff"/>
<rect x="891" y="644" width="9" height="4" fill="#ffffff"/>
<rect x="931" y="643" width="1" height="4" fill="#ffffff"/>
<rect x="936" y="644" width="7" height="4" fill="#ffffff"/>
<rect x="851" y="650" width="4" height="1" fill="#ffffff"/>
<rect x="854" y="650" width="1" height="4" fill="#ffffff"/>
<rect x="859" y="650" width="12" height="4" fill="#ffffff"/>
<rect x="891" y="650" width="24" height="4" fill="#ffffff"/>
<rect x="931" y="649" width="1" height="4" fill="#ffffff"/>
<rect x="936" y="650" width="7" height="4" fill="#ffffff"/>
<rect x="987" y="505" width="5" height="5" fill="#ffffff"/>
<rect x="987" y="511" width="5" height="5" fill="#ffffff"/>
<rect x="849" y="664" width="154" height="1" fill="#ffffff"/>
<text x="853" y="662" font-size="5.5" font-weight="bold" fill="#fff" text-anchor="middle" lengthAdjust="spacingAndGlyphs" textLength="5">序</text>
<text x="873.5" y="662" font-size="6.5" font-weight="bold" fill="#fff" text-anchor="middle" lengthAdjust="spacingAndGlyphs" textLength="10">代号</text><text x="909.5" y="662" font-size="6.5" font-weight="bold" fill="#fff" text-anchor="middle" lengthAdjust="spacingAndGlyphs" textLength="10">名称</text><text x="951" y="662" font-size="6.5" font-weight="bold" fill="#fff" text-anchor="middle" lengthAdjust="spacingAndGlyphs" textLength="10">材料</text><text x="994" y="662" font-size="6.5" font-weight="bold" fill="#fff" text-anchor="middle" lengthAdjust="spacingAndGlyphs" textLength="10">备注</text>
<rect x="968" y="654" width="6" height="6" fill="#ffffff"/>
<rect x="976" y="654" width="8" height="6" fill="#ffffff"/>
<rect x="970" y="660" width="4" height="3" fill="#ffffff"/>
<rect x="978" y="660" width="4" height="3" fill="#ffffff"/>
<rect x="849" y="670" width="69" height="1" fill="#ffffff"/>
<rect x="849" y="676" width="69" height="1" fill="#ffffff"/>
<rect x="849" y="682" width="69" height="1" fill="#ffffff"/>
<rect x="849" y="688" width="69" height="1" fill="#ffffff"/>
<rect x="849" y="694" width="69" height="1" fill="#ffffff"/>
<rect x="849" y="700" width="69" height="1" fill="#ffffff"/>
<rect x="849" y="706" width="69" height="1" fill="#ffffff"/>
<rect x="858" y="664" width="1" height="25" fill="#ffffff"/>
<rect x="866" y="664" width="1" height="25" fill="#ffffff"/>
<rect x="880" y="664" width="1" height="25" fill="#ffffff"/>
<rect x="895" y="664" width="1" height="25" fill="#ffffff"/>
<rect x="904" y="664" width="1" height="25" fill="#ffffff"/>
<rect x="860" y="688" width="1" height="25" fill="#ffffff"/>
<rect x="870" y="688" width="1" height="25" fill="#ffffff"/>
<rect x="883" y="688" width="1" height="25" fill="#ffffff"/>
<rect x="895" y="688" width="1" height="25" fill="#ffffff"/>
<rect x="904" y="688" width="1" height="25" fill="#ffffff"/>
<rect x="849" y="664" width="1" height="49" fill="#ffffff"/>
<rect x="917" y="664" width="1" height="49" fill="#ffffff"/>
<rect x="960" y="664" width="1" height="49" fill="#ffffff"/>
<rect x="917" y="688" width="44" height="1" fill="#ffffff"/>
<rect x="917" y="697" width="44" height="1" fill="#ffffff"/>
<rect x="917" y="704" width="44" height="1" fill="#ffffff"/>
<rect x="940" y="688" width="1" height="17" fill="#ffffff"/>
<rect x="950" y="688" width="1" height="17" fill="#ffffff"/>
<rect x="922" y="697" width="1" height="8" fill="#ffffff"/>
<rect x="927" y="697" width="1" height="8" fill="#ffffff"/>
<rect x="932" y="697" width="1" height="8" fill="#ffffff"/>
<rect x="937" y="697" width="1" height="8" fill="#ffffff"/>
<rect x="960" y="679" width="43" height="1" fill="#ffffff"/>
<rect x="960" y="694" width="43" height="1" fill="#ffffff"/>
<rect x="960" y="704" width="43" height="1" fill="#ffffff"/>
<rect x="851" y="684" width="6" height="4" fill="#1ef01e"/>
<rect x="859" y="684" width="6" height="4" fill="#1ef01e"/>
<rect x="870" y="684" width="6" height="4" fill="#1ef01e"/>
<rect x="880" y="684" width="13" height="4" fill="#1ef01e"/>
<rect x="896" y="684" width="6" height="4" fill="#1ef01e"/>
<rect x="905" y="684" width="12" height="4" fill="#1ef01e"/>
<rect x="852" y="690" width="5" height="4" fill="#1ef01e"/>
<rect x="884" y="690" width="9" height="4" fill="#1ef01e"/>
<rect x="852" y="701" width="5" height="4" fill="#1ef01e"/>
<rect x="852" y="707" width="6" height="5" fill="#1ef01e"/>
<rect x="886" y="708" width="5" height="4" fill="#1ef01e"/>
<rect x="922" y="691" width="12" height="5" fill="#1ef01e"/>
<rect x="942" y="691" width="5" height="5" fill="#1ef01e"/>
<rect x="952" y="691" width="6" height="5" fill="#1ef01e"/>
<rect x="942" y="699" width="6" height="5" fill="#1ef01e"/>
<rect x="951" y="699" width="8" height="5" fill="#1ef01e"/>
<rect x="920" y="707" width="4" height="5" fill="#1ef01e"/>
<rect x="932" y="707" width="4" height="5" fill="#1ef01e"/>
<rect x="942" y="707" width="4" height="5" fill="#1ef01e"/>
<rect x="954" y="707" width="4" height="5" fill="#1ef01e"/>
<text x="981.5" y="691" font-size="6.5" font-weight="bold" fill="#22f022" text-anchor="middle" textLength="17" lengthAdjust="spacingAndGlyphs">装配图</text>
<text x="981.5" y="702.5" font-size="6" font-weight="bold" font-style="italic" fill="#22f022" text-anchor="middle" textLength="12" lengthAdjust="spacingAndGlyphs">A0 1</text>
</svg>
</body></html>
